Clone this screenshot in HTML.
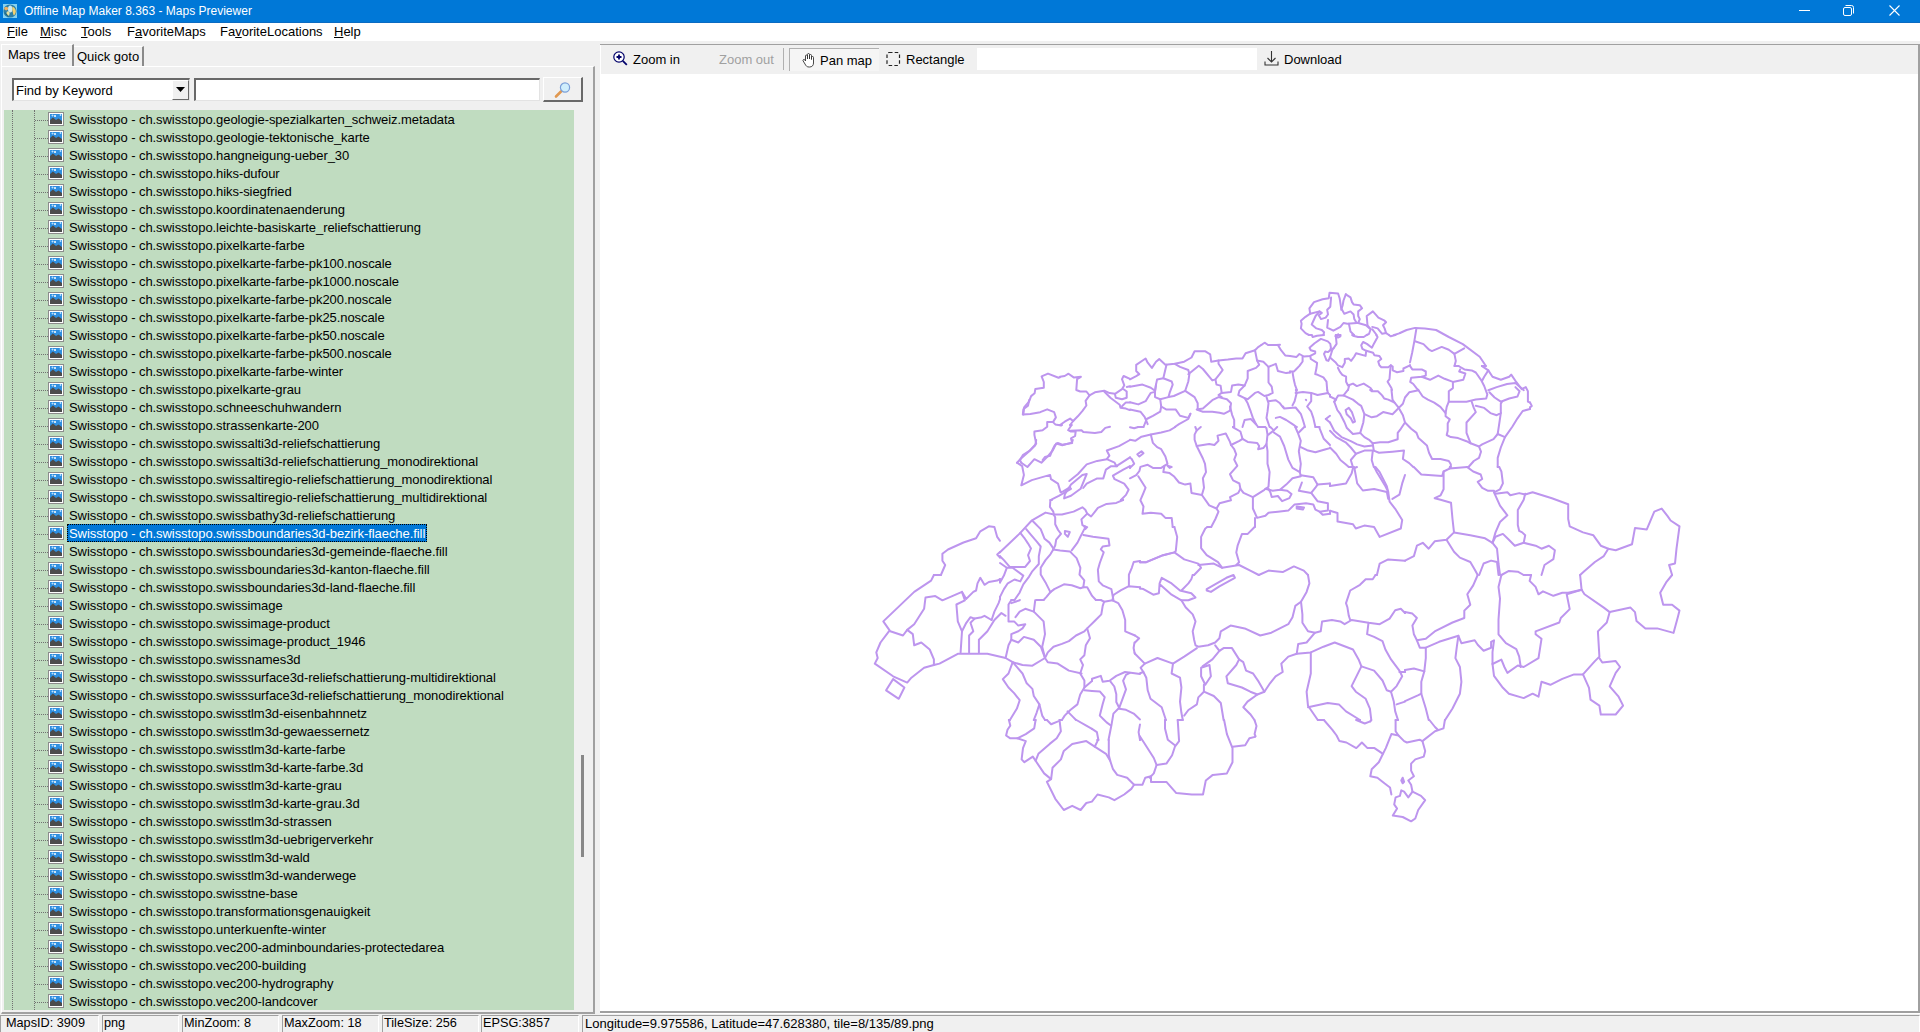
<!DOCTYPE html>
<html><head><meta charset="utf-8">
<style>
*{margin:0;padding:0;box-sizing:border-box}
html,body{width:1920px;height:1032px;overflow:hidden;background:#f0f0f0;font-family:"Liberation Sans",sans-serif;font-size:13px;color:#000;position:relative}
.abs{position:absolute}
#title{left:0;top:0;width:1920px;height:23px;background:#0078d7;color:#fff;border-bottom:1px solid #0a6bc2}
#title .tt{position:absolute;left:24px;top:4px;font-size:12px;color:#fff;white-space:nowrap}
#menu{left:0;top:23px;width:1920px;height:18px;background:#fff}
#menu span{position:absolute;top:1px;white-space:nowrap}
#menu u{text-decoration:underline;text-decoration-thickness:1px;text-underline-offset:1px}
.tab{position:absolute;white-space:nowrap}
.row{position:absolute;left:0;height:18px;width:563px}
.row .ic{position:absolute;left:44px;top:1px}
.row .t{position:absolute;left:63px;top:0;height:18px;line-height:19px;padding:0 2px;white-space:nowrap;letter-spacing:-0.07px}
.row .t.sel{background:#0078d7;color:#fff;outline:1px dotted #000;outline-offset:-1px}
.sb span{position:absolute;top:2px;white-space:nowrap}
.sp{position:absolute;top:1015px;height:17px;border-top:1px solid #a0a0a0;border-left:1px solid #a0a0a0;border-right:1px solid #fff;background:#f0f0f0}
.sp span{position:absolute;left:1px;top:0px;white-space:nowrap;font-size:12.7px}
</style></head><body>
<div id="title" class="abs">
 <svg class="abs" style="left:3px;top:4px" width="14" height="14" viewBox="0 0 14 14"><rect width="14" height="14" fill="#86d2f2"/><circle cx="7" cy="7" r="6.6" fill="#2c7fa8"/><ellipse cx="7.2" cy="5" rx="2.2" ry="3.5" fill="#cfe9ef"/><ellipse cx="3.2" cy="4.6" rx="2" ry="1.8" fill="#f0b060"/><path d="M9.5 2.5Q13 4 12.8 8Q12 12 10.5 11Q9.5 8 9.2 5Z" fill="#f2d070"/><ellipse cx="5" cy="9.5" rx="1.6" ry="2.2" fill="#e6e0a0"/><path d="M1.5 8Q3 12 6 13.2L4 10Z" fill="#1f5f6f"/></svg>
 <span class="tt">Offline Map Maker 8.363 - Maps Previewer</span>
 <svg class="abs" style="left:1799px;top:10px" width="11" height="2"><rect width="11" height="1" fill="#fff"/></svg>
 <svg class="abs" style="left:1843px;top:5px" width="11" height="11" viewBox="0 0 11 11"><rect x="0.5" y="2.5" width="8" height="8" rx="1.5" fill="none" stroke="#fff"/><path d="M2.5 0.5h6a2 2 0 0 1 2 2v6" fill="none" stroke="#fff"/></svg>
 <svg class="abs" style="left:1889px;top:5px" width="11" height="11" viewBox="0 0 11 11"><path d="M0.5 0.5L10.5 10.5M10.5 0.5L0.5 10.5" stroke="#fff" stroke-width="1.1"/></svg>
</div>
<div id="menu" class="abs">
 <span style="left:7px"><u>F</u>ile</span>
 <span style="left:40px"><u>M</u>isc</span>
 <span style="left:81px"><u>T</u>ools</span>
 <span style="left:127px">F<u>a</u>voriteMaps</span>
 <span style="left:220px">Fa<u>v</u>oriteLocations</span>
 <span style="left:334px"><u>H</u>elp</span>
</div>
<!-- left panel tabs -->
<div class="abs" style="left:1px;top:44px;width:73px;height:23px;background:#f0f0f0;border-top:1px solid #fff;border-left:1px solid #fff;border-right:2px solid #8a8a8a"></div>
<span class="tab" style="left:8px;top:47px">Maps tree</span>
<div class="abs" style="left:74px;top:46px;width:70px;height:20px;background:#f0f0f0;border-top:1px solid #fff;border-right:2px solid #8a8a8a"></div>
<span class="tab" style="left:77px;top:49px">Quick goto</span>
<!-- tab sheet -->
<div class="abs" style="left:1px;top:66px;width:594px;height:948px;border-top:1px solid #fff;border-left:1px solid #fff;border-right:2px solid #a0a0a0;border-bottom:2px solid #a0a0a0"></div>
<!-- combo -->
<div class="abs" style="left:12px;top:78px;width:178px;height:23px;background:#fff;border-top:2px solid #696969;border-left:2px solid #696969;border-bottom:1px solid #e3e3e3;border-right:1px solid #e3e3e3"></div>
<span class="abs" style="left:16px;top:83px">Find by Keyword</span>
<div class="abs" style="left:172px;top:80px;width:17px;height:20px;background:#f0f0f0;border-top:1px solid #fff;border-left:1px solid #fff;border-right:1px solid #696969;border-bottom:1px solid #696969"></div>
<svg class="abs" style="left:176px;top:87px" width="9" height="5"><path d="M0 0H9L4.5 5Z" fill="#000"/></svg>
<div class="abs" style="left:194px;top:78px;width:346px;height:23px;background:#fff;border-top:2px solid #696969;border-left:2px solid #696969;border-bottom:1px solid #e3e3e3;border-right:1px solid #e3e3e3"></div>
<div class="abs" style="left:543px;top:77px;width:40px;height:25px;background:#f0f0f0;border-top:1px solid #fff;border-left:1px solid #fff;border-right:2px solid #696969;border-bottom:2px solid #696969"></div>
<svg class="abs" style="left:554px;top:81px" width="18" height="18" viewBox="0 0 18 18"><line x1="2" y1="15.5" x2="7" y2="10.5" stroke="#e09850" stroke-width="2.6" stroke-linecap="round"/><circle cx="11" cy="6.5" r="4.6" fill="#cfeefc" stroke="#7a9fd8" stroke-width="1.2"/></svg>
<!-- tree -->
<div class="abs" style="left:4px;top:110px;width:570px;height:900px;background:#c0dcc0;overflow:hidden">
 <div class="abs" style="left:8px;top:0;width:1px;height:900px;border-left:1px dotted #707070"></div>
 <div class="abs" style="left:30px;top:0;width:1px;height:900px;border-left:1px dotted #707070"></div>
 <div class="abs" style="left:31px;top:10px;width:13px;height:1px;border-top:1px dotted #707070"></div><div class="abs" style="left:31px;top:28px;width:13px;height:1px;border-top:1px dotted #707070"></div><div class="abs" style="left:31px;top:46px;width:13px;height:1px;border-top:1px dotted #707070"></div><div class="abs" style="left:31px;top:64px;width:13px;height:1px;border-top:1px dotted #707070"></div><div class="abs" style="left:31px;top:82px;width:13px;height:1px;border-top:1px dotted #707070"></div><div class="abs" style="left:31px;top:100px;width:13px;height:1px;border-top:1px dotted #707070"></div><div class="abs" style="left:31px;top:118px;width:13px;height:1px;border-top:1px dotted #707070"></div><div class="abs" style="left:31px;top:136px;width:13px;height:1px;border-top:1px dotted #707070"></div><div class="abs" style="left:31px;top:154px;width:13px;height:1px;border-top:1px dotted #707070"></div><div class="abs" style="left:31px;top:172px;width:13px;height:1px;border-top:1px dotted #707070"></div><div class="abs" style="left:31px;top:190px;width:13px;height:1px;border-top:1px dotted #707070"></div><div class="abs" style="left:31px;top:208px;width:13px;height:1px;border-top:1px dotted #707070"></div><div class="abs" style="left:31px;top:226px;width:13px;height:1px;border-top:1px dotted #707070"></div><div class="abs" style="left:31px;top:244px;width:13px;height:1px;border-top:1px dotted #707070"></div><div class="abs" style="left:31px;top:262px;width:13px;height:1px;border-top:1px dotted #707070"></div><div class="abs" style="left:31px;top:280px;width:13px;height:1px;border-top:1px dotted #707070"></div><div class="abs" style="left:31px;top:298px;width:13px;height:1px;border-top:1px dotted #707070"></div><div class="abs" style="left:31px;top:316px;width:13px;height:1px;border-top:1px dotted #707070"></div><div class="abs" style="left:31px;top:334px;width:13px;height:1px;border-top:1px dotted #707070"></div><div class="abs" style="left:31px;top:352px;width:13px;height:1px;border-top:1px dotted #707070"></div><div class="abs" style="left:31px;top:370px;width:13px;height:1px;border-top:1px dotted #707070"></div><div class="abs" style="left:31px;top:388px;width:13px;height:1px;border-top:1px dotted #707070"></div><div class="abs" style="left:31px;top:406px;width:13px;height:1px;border-top:1px dotted #707070"></div><div class="abs" style="left:31px;top:424px;width:13px;height:1px;border-top:1px dotted #707070"></div><div class="abs" style="left:31px;top:442px;width:13px;height:1px;border-top:1px dotted #707070"></div><div class="abs" style="left:31px;top:460px;width:13px;height:1px;border-top:1px dotted #707070"></div><div class="abs" style="left:31px;top:478px;width:13px;height:1px;border-top:1px dotted #707070"></div><div class="abs" style="left:31px;top:496px;width:13px;height:1px;border-top:1px dotted #707070"></div><div class="abs" style="left:31px;top:514px;width:13px;height:1px;border-top:1px dotted #707070"></div><div class="abs" style="left:31px;top:532px;width:13px;height:1px;border-top:1px dotted #707070"></div><div class="abs" style="left:31px;top:550px;width:13px;height:1px;border-top:1px dotted #707070"></div><div class="abs" style="left:31px;top:568px;width:13px;height:1px;border-top:1px dotted #707070"></div><div class="abs" style="left:31px;top:586px;width:13px;height:1px;border-top:1px dotted #707070"></div><div class="abs" style="left:31px;top:604px;width:13px;height:1px;border-top:1px dotted #707070"></div><div class="abs" style="left:31px;top:622px;width:13px;height:1px;border-top:1px dotted #707070"></div><div class="abs" style="left:31px;top:640px;width:13px;height:1px;border-top:1px dotted #707070"></div><div class="abs" style="left:31px;top:658px;width:13px;height:1px;border-top:1px dotted #707070"></div><div class="abs" style="left:31px;top:676px;width:13px;height:1px;border-top:1px dotted #707070"></div><div class="abs" style="left:31px;top:694px;width:13px;height:1px;border-top:1px dotted #707070"></div><div class="abs" style="left:31px;top:712px;width:13px;height:1px;border-top:1px dotted #707070"></div><div class="abs" style="left:31px;top:730px;width:13px;height:1px;border-top:1px dotted #707070"></div><div class="abs" style="left:31px;top:748px;width:13px;height:1px;border-top:1px dotted #707070"></div><div class="abs" style="left:31px;top:766px;width:13px;height:1px;border-top:1px dotted #707070"></div><div class="abs" style="left:31px;top:784px;width:13px;height:1px;border-top:1px dotted #707070"></div><div class="abs" style="left:31px;top:802px;width:13px;height:1px;border-top:1px dotted #707070"></div><div class="abs" style="left:31px;top:820px;width:13px;height:1px;border-top:1px dotted #707070"></div><div class="abs" style="left:31px;top:838px;width:13px;height:1px;border-top:1px dotted #707070"></div><div class="abs" style="left:31px;top:856px;width:13px;height:1px;border-top:1px dotted #707070"></div><div class="abs" style="left:31px;top:874px;width:13px;height:1px;border-top:1px dotted #707070"></div><div class="abs" style="left:31px;top:892px;width:13px;height:1px;border-top:1px dotted #707070"></div>
 <div class="row" style="top:0px"><div class="hl"></div><svg class="ic" width="16" height="16" viewBox="0 0 16 16"><rect x="0.5" y="1.5" width="15" height="13" fill="#fff" stroke="#8c8c8c"/><rect x="2" y="3" width="12" height="10" fill="#2f8fe0"/><path d="M2 13 L2 9 L5 6.5 L8 9 L10.5 7.5 L14 10 L14 13Z" fill="#4b4b4b"/><circle cx="7" cy="5" r="1" fill="#fff"/><path d="M3.5 4.5h2M4.5 3.5v2M11.5 4h2M12.5 3v2" stroke="#bfe3ff" stroke-width="0.8"/></svg><span class="t">Swisstopo - ch.swisstopo.geologie-spezialkarten_schweiz.metadata</span></div>
<div class="row" style="top:18px"><div class="hl"></div><svg class="ic" width="16" height="16" viewBox="0 0 16 16"><rect x="0.5" y="1.5" width="15" height="13" fill="#fff" stroke="#8c8c8c"/><rect x="2" y="3" width="12" height="10" fill="#2f8fe0"/><path d="M2 13 L2 9 L5 6.5 L8 9 L10.5 7.5 L14 10 L14 13Z" fill="#4b4b4b"/><circle cx="7" cy="5" r="1" fill="#fff"/><path d="M3.5 4.5h2M4.5 3.5v2M11.5 4h2M12.5 3v2" stroke="#bfe3ff" stroke-width="0.8"/></svg><span class="t">Swisstopo - ch.swisstopo.geologie-tektonische_karte</span></div>
<div class="row" style="top:36px"><div class="hl"></div><svg class="ic" width="16" height="16" viewBox="0 0 16 16"><rect x="0.5" y="1.5" width="15" height="13" fill="#fff" stroke="#8c8c8c"/><rect x="2" y="3" width="12" height="10" fill="#2f8fe0"/><path d="M2 13 L2 9 L5 6.5 L8 9 L10.5 7.5 L14 10 L14 13Z" fill="#4b4b4b"/><circle cx="7" cy="5" r="1" fill="#fff"/><path d="M3.5 4.5h2M4.5 3.5v2M11.5 4h2M12.5 3v2" stroke="#bfe3ff" stroke-width="0.8"/></svg><span class="t">Swisstopo - ch.swisstopo.hangneigung-ueber_30</span></div>
<div class="row" style="top:54px"><div class="hl"></div><svg class="ic" width="16" height="16" viewBox="0 0 16 16"><rect x="0.5" y="1.5" width="15" height="13" fill="#fff" stroke="#8c8c8c"/><rect x="2" y="3" width="12" height="10" fill="#2f8fe0"/><path d="M2 13 L2 9 L5 6.5 L8 9 L10.5 7.5 L14 10 L14 13Z" fill="#4b4b4b"/><circle cx="7" cy="5" r="1" fill="#fff"/><path d="M3.5 4.5h2M4.5 3.5v2M11.5 4h2M12.5 3v2" stroke="#bfe3ff" stroke-width="0.8"/></svg><span class="t">Swisstopo - ch.swisstopo.hiks-dufour</span></div>
<div class="row" style="top:72px"><div class="hl"></div><svg class="ic" width="16" height="16" viewBox="0 0 16 16"><rect x="0.5" y="1.5" width="15" height="13" fill="#fff" stroke="#8c8c8c"/><rect x="2" y="3" width="12" height="10" fill="#2f8fe0"/><path d="M2 13 L2 9 L5 6.5 L8 9 L10.5 7.5 L14 10 L14 13Z" fill="#4b4b4b"/><circle cx="7" cy="5" r="1" fill="#fff"/><path d="M3.5 4.5h2M4.5 3.5v2M11.5 4h2M12.5 3v2" stroke="#bfe3ff" stroke-width="0.8"/></svg><span class="t">Swisstopo - ch.swisstopo.hiks-siegfried</span></div>
<div class="row" style="top:90px"><div class="hl"></div><svg class="ic" width="16" height="16" viewBox="0 0 16 16"><rect x="0.5" y="1.5" width="15" height="13" fill="#fff" stroke="#8c8c8c"/><rect x="2" y="3" width="12" height="10" fill="#2f8fe0"/><path d="M2 13 L2 9 L5 6.5 L8 9 L10.5 7.5 L14 10 L14 13Z" fill="#4b4b4b"/><circle cx="7" cy="5" r="1" fill="#fff"/><path d="M3.5 4.5h2M4.5 3.5v2M11.5 4h2M12.5 3v2" stroke="#bfe3ff" stroke-width="0.8"/></svg><span class="t">Swisstopo - ch.swisstopo.koordinatenaenderung</span></div>
<div class="row" style="top:108px"><div class="hl"></div><svg class="ic" width="16" height="16" viewBox="0 0 16 16"><rect x="0.5" y="1.5" width="15" height="13" fill="#fff" stroke="#8c8c8c"/><rect x="2" y="3" width="12" height="10" fill="#2f8fe0"/><path d="M2 13 L2 9 L5 6.5 L8 9 L10.5 7.5 L14 10 L14 13Z" fill="#4b4b4b"/><circle cx="7" cy="5" r="1" fill="#fff"/><path d="M3.5 4.5h2M4.5 3.5v2M11.5 4h2M12.5 3v2" stroke="#bfe3ff" stroke-width="0.8"/></svg><span class="t">Swisstopo - ch.swisstopo.leichte-basiskarte_reliefschattierung</span></div>
<div class="row" style="top:126px"><div class="hl"></div><svg class="ic" width="16" height="16" viewBox="0 0 16 16"><rect x="0.5" y="1.5" width="15" height="13" fill="#fff" stroke="#8c8c8c"/><rect x="2" y="3" width="12" height="10" fill="#2f8fe0"/><path d="M2 13 L2 9 L5 6.5 L8 9 L10.5 7.5 L14 10 L14 13Z" fill="#4b4b4b"/><circle cx="7" cy="5" r="1" fill="#fff"/><path d="M3.5 4.5h2M4.5 3.5v2M11.5 4h2M12.5 3v2" stroke="#bfe3ff" stroke-width="0.8"/></svg><span class="t">Swisstopo - ch.swisstopo.pixelkarte-farbe</span></div>
<div class="row" style="top:144px"><div class="hl"></div><svg class="ic" width="16" height="16" viewBox="0 0 16 16"><rect x="0.5" y="1.5" width="15" height="13" fill="#fff" stroke="#8c8c8c"/><rect x="2" y="3" width="12" height="10" fill="#2f8fe0"/><path d="M2 13 L2 9 L5 6.5 L8 9 L10.5 7.5 L14 10 L14 13Z" fill="#4b4b4b"/><circle cx="7" cy="5" r="1" fill="#fff"/><path d="M3.5 4.5h2M4.5 3.5v2M11.5 4h2M12.5 3v2" stroke="#bfe3ff" stroke-width="0.8"/></svg><span class="t">Swisstopo - ch.swisstopo.pixelkarte-farbe-pk100.noscale</span></div>
<div class="row" style="top:162px"><div class="hl"></div><svg class="ic" width="16" height="16" viewBox="0 0 16 16"><rect x="0.5" y="1.5" width="15" height="13" fill="#fff" stroke="#8c8c8c"/><rect x="2" y="3" width="12" height="10" fill="#2f8fe0"/><path d="M2 13 L2 9 L5 6.5 L8 9 L10.5 7.5 L14 10 L14 13Z" fill="#4b4b4b"/><circle cx="7" cy="5" r="1" fill="#fff"/><path d="M3.5 4.5h2M4.5 3.5v2M11.5 4h2M12.5 3v2" stroke="#bfe3ff" stroke-width="0.8"/></svg><span class="t">Swisstopo - ch.swisstopo.pixelkarte-farbe-pk1000.noscale</span></div>
<div class="row" style="top:180px"><div class="hl"></div><svg class="ic" width="16" height="16" viewBox="0 0 16 16"><rect x="0.5" y="1.5" width="15" height="13" fill="#fff" stroke="#8c8c8c"/><rect x="2" y="3" width="12" height="10" fill="#2f8fe0"/><path d="M2 13 L2 9 L5 6.5 L8 9 L10.5 7.5 L14 10 L14 13Z" fill="#4b4b4b"/><circle cx="7" cy="5" r="1" fill="#fff"/><path d="M3.5 4.5h2M4.5 3.5v2M11.5 4h2M12.5 3v2" stroke="#bfe3ff" stroke-width="0.8"/></svg><span class="t">Swisstopo - ch.swisstopo.pixelkarte-farbe-pk200.noscale</span></div>
<div class="row" style="top:198px"><div class="hl"></div><svg class="ic" width="16" height="16" viewBox="0 0 16 16"><rect x="0.5" y="1.5" width="15" height="13" fill="#fff" stroke="#8c8c8c"/><rect x="2" y="3" width="12" height="10" fill="#2f8fe0"/><path d="M2 13 L2 9 L5 6.5 L8 9 L10.5 7.5 L14 10 L14 13Z" fill="#4b4b4b"/><circle cx="7" cy="5" r="1" fill="#fff"/><path d="M3.5 4.5h2M4.5 3.5v2M11.5 4h2M12.5 3v2" stroke="#bfe3ff" stroke-width="0.8"/></svg><span class="t">Swisstopo - ch.swisstopo.pixelkarte-farbe-pk25.noscale</span></div>
<div class="row" style="top:216px"><div class="hl"></div><svg class="ic" width="16" height="16" viewBox="0 0 16 16"><rect x="0.5" y="1.5" width="15" height="13" fill="#fff" stroke="#8c8c8c"/><rect x="2" y="3" width="12" height="10" fill="#2f8fe0"/><path d="M2 13 L2 9 L5 6.5 L8 9 L10.5 7.5 L14 10 L14 13Z" fill="#4b4b4b"/><circle cx="7" cy="5" r="1" fill="#fff"/><path d="M3.5 4.5h2M4.5 3.5v2M11.5 4h2M12.5 3v2" stroke="#bfe3ff" stroke-width="0.8"/></svg><span class="t">Swisstopo - ch.swisstopo.pixelkarte-farbe-pk50.noscale</span></div>
<div class="row" style="top:234px"><div class="hl"></div><svg class="ic" width="16" height="16" viewBox="0 0 16 16"><rect x="0.5" y="1.5" width="15" height="13" fill="#fff" stroke="#8c8c8c"/><rect x="2" y="3" width="12" height="10" fill="#2f8fe0"/><path d="M2 13 L2 9 L5 6.5 L8 9 L10.5 7.5 L14 10 L14 13Z" fill="#4b4b4b"/><circle cx="7" cy="5" r="1" fill="#fff"/><path d="M3.5 4.5h2M4.5 3.5v2M11.5 4h2M12.5 3v2" stroke="#bfe3ff" stroke-width="0.8"/></svg><span class="t">Swisstopo - ch.swisstopo.pixelkarte-farbe-pk500.noscale</span></div>
<div class="row" style="top:252px"><div class="hl"></div><svg class="ic" width="16" height="16" viewBox="0 0 16 16"><rect x="0.5" y="1.5" width="15" height="13" fill="#fff" stroke="#8c8c8c"/><rect x="2" y="3" width="12" height="10" fill="#2f8fe0"/><path d="M2 13 L2 9 L5 6.5 L8 9 L10.5 7.5 L14 10 L14 13Z" fill="#4b4b4b"/><circle cx="7" cy="5" r="1" fill="#fff"/><path d="M3.5 4.5h2M4.5 3.5v2M11.5 4h2M12.5 3v2" stroke="#bfe3ff" stroke-width="0.8"/></svg><span class="t">Swisstopo - ch.swisstopo.pixelkarte-farbe-winter</span></div>
<div class="row" style="top:270px"><div class="hl"></div><svg class="ic" width="16" height="16" viewBox="0 0 16 16"><rect x="0.5" y="1.5" width="15" height="13" fill="#fff" stroke="#8c8c8c"/><rect x="2" y="3" width="12" height="10" fill="#2f8fe0"/><path d="M2 13 L2 9 L5 6.5 L8 9 L10.5 7.5 L14 10 L14 13Z" fill="#4b4b4b"/><circle cx="7" cy="5" r="1" fill="#fff"/><path d="M3.5 4.5h2M4.5 3.5v2M11.5 4h2M12.5 3v2" stroke="#bfe3ff" stroke-width="0.8"/></svg><span class="t">Swisstopo - ch.swisstopo.pixelkarte-grau</span></div>
<div class="row" style="top:288px"><div class="hl"></div><svg class="ic" width="16" height="16" viewBox="0 0 16 16"><rect x="0.5" y="1.5" width="15" height="13" fill="#fff" stroke="#8c8c8c"/><rect x="2" y="3" width="12" height="10" fill="#2f8fe0"/><path d="M2 13 L2 9 L5 6.5 L8 9 L10.5 7.5 L14 10 L14 13Z" fill="#4b4b4b"/><circle cx="7" cy="5" r="1" fill="#fff"/><path d="M3.5 4.5h2M4.5 3.5v2M11.5 4h2M12.5 3v2" stroke="#bfe3ff" stroke-width="0.8"/></svg><span class="t">Swisstopo - ch.swisstopo.schneeschuhwandern</span></div>
<div class="row" style="top:306px"><div class="hl"></div><svg class="ic" width="16" height="16" viewBox="0 0 16 16"><rect x="0.5" y="1.5" width="15" height="13" fill="#fff" stroke="#8c8c8c"/><rect x="2" y="3" width="12" height="10" fill="#2f8fe0"/><path d="M2 13 L2 9 L5 6.5 L8 9 L10.5 7.5 L14 10 L14 13Z" fill="#4b4b4b"/><circle cx="7" cy="5" r="1" fill="#fff"/><path d="M3.5 4.5h2M4.5 3.5v2M11.5 4h2M12.5 3v2" stroke="#bfe3ff" stroke-width="0.8"/></svg><span class="t">Swisstopo - ch.swisstopo.strassenkarte-200</span></div>
<div class="row" style="top:324px"><div class="hl"></div><svg class="ic" width="16" height="16" viewBox="0 0 16 16"><rect x="0.5" y="1.5" width="15" height="13" fill="#fff" stroke="#8c8c8c"/><rect x="2" y="3" width="12" height="10" fill="#2f8fe0"/><path d="M2 13 L2 9 L5 6.5 L8 9 L10.5 7.5 L14 10 L14 13Z" fill="#4b4b4b"/><circle cx="7" cy="5" r="1" fill="#fff"/><path d="M3.5 4.5h2M4.5 3.5v2M11.5 4h2M12.5 3v2" stroke="#bfe3ff" stroke-width="0.8"/></svg><span class="t">Swisstopo - ch.swisstopo.swissalti3d-reliefschattierung</span></div>
<div class="row" style="top:342px"><div class="hl"></div><svg class="ic" width="16" height="16" viewBox="0 0 16 16"><rect x="0.5" y="1.5" width="15" height="13" fill="#fff" stroke="#8c8c8c"/><rect x="2" y="3" width="12" height="10" fill="#2f8fe0"/><path d="M2 13 L2 9 L5 6.5 L8 9 L10.5 7.5 L14 10 L14 13Z" fill="#4b4b4b"/><circle cx="7" cy="5" r="1" fill="#fff"/><path d="M3.5 4.5h2M4.5 3.5v2M11.5 4h2M12.5 3v2" stroke="#bfe3ff" stroke-width="0.8"/></svg><span class="t">Swisstopo - ch.swisstopo.swissalti3d-reliefschattierung_monodirektional</span></div>
<div class="row" style="top:360px"><div class="hl"></div><svg class="ic" width="16" height="16" viewBox="0 0 16 16"><rect x="0.5" y="1.5" width="15" height="13" fill="#fff" stroke="#8c8c8c"/><rect x="2" y="3" width="12" height="10" fill="#2f8fe0"/><path d="M2 13 L2 9 L5 6.5 L8 9 L10.5 7.5 L14 10 L14 13Z" fill="#4b4b4b"/><circle cx="7" cy="5" r="1" fill="#fff"/><path d="M3.5 4.5h2M4.5 3.5v2M11.5 4h2M12.5 3v2" stroke="#bfe3ff" stroke-width="0.8"/></svg><span class="t">Swisstopo - ch.swisstopo.swissaltiregio-reliefschattierung_monodirektional</span></div>
<div class="row" style="top:378px"><div class="hl"></div><svg class="ic" width="16" height="16" viewBox="0 0 16 16"><rect x="0.5" y="1.5" width="15" height="13" fill="#fff" stroke="#8c8c8c"/><rect x="2" y="3" width="12" height="10" fill="#2f8fe0"/><path d="M2 13 L2 9 L5 6.5 L8 9 L10.5 7.5 L14 10 L14 13Z" fill="#4b4b4b"/><circle cx="7" cy="5" r="1" fill="#fff"/><path d="M3.5 4.5h2M4.5 3.5v2M11.5 4h2M12.5 3v2" stroke="#bfe3ff" stroke-width="0.8"/></svg><span class="t">Swisstopo - ch.swisstopo.swissaltiregio-reliefschattierung_multidirektional</span></div>
<div class="row" style="top:396px"><div class="hl"></div><svg class="ic" width="16" height="16" viewBox="0 0 16 16"><rect x="0.5" y="1.5" width="15" height="13" fill="#fff" stroke="#8c8c8c"/><rect x="2" y="3" width="12" height="10" fill="#2f8fe0"/><path d="M2 13 L2 9 L5 6.5 L8 9 L10.5 7.5 L14 10 L14 13Z" fill="#4b4b4b"/><circle cx="7" cy="5" r="1" fill="#fff"/><path d="M3.5 4.5h2M4.5 3.5v2M11.5 4h2M12.5 3v2" stroke="#bfe3ff" stroke-width="0.8"/></svg><span class="t">Swisstopo - ch.swisstopo.swissbathy3d-reliefschattierung</span></div>
<div class="row" style="top:414px"><div class="hl"></div><svg class="ic" width="16" height="16" viewBox="0 0 16 16"><rect x="0.5" y="1.5" width="15" height="13" fill="#fff" stroke="#8c8c8c"/><rect x="2" y="3" width="12" height="10" fill="#2f8fe0"/><path d="M2 13 L2 9 L5 6.5 L8 9 L10.5 7.5 L14 10 L14 13Z" fill="#4b4b4b"/><circle cx="7" cy="5" r="1" fill="#fff"/><path d="M3.5 4.5h2M4.5 3.5v2M11.5 4h2M12.5 3v2" stroke="#bfe3ff" stroke-width="0.8"/></svg><span class="t sel">Swisstopo - ch.swisstopo.swissboundaries3d-bezirk-flaeche.fill</span></div>
<div class="row" style="top:432px"><div class="hl"></div><svg class="ic" width="16" height="16" viewBox="0 0 16 16"><rect x="0.5" y="1.5" width="15" height="13" fill="#fff" stroke="#8c8c8c"/><rect x="2" y="3" width="12" height="10" fill="#2f8fe0"/><path d="M2 13 L2 9 L5 6.5 L8 9 L10.5 7.5 L14 10 L14 13Z" fill="#4b4b4b"/><circle cx="7" cy="5" r="1" fill="#fff"/><path d="M3.5 4.5h2M4.5 3.5v2M11.5 4h2M12.5 3v2" stroke="#bfe3ff" stroke-width="0.8"/></svg><span class="t">Swisstopo - ch.swisstopo.swissboundaries3d-gemeinde-flaeche.fill</span></div>
<div class="row" style="top:450px"><div class="hl"></div><svg class="ic" width="16" height="16" viewBox="0 0 16 16"><rect x="0.5" y="1.5" width="15" height="13" fill="#fff" stroke="#8c8c8c"/><rect x="2" y="3" width="12" height="10" fill="#2f8fe0"/><path d="M2 13 L2 9 L5 6.5 L8 9 L10.5 7.5 L14 10 L14 13Z" fill="#4b4b4b"/><circle cx="7" cy="5" r="1" fill="#fff"/><path d="M3.5 4.5h2M4.5 3.5v2M11.5 4h2M12.5 3v2" stroke="#bfe3ff" stroke-width="0.8"/></svg><span class="t">Swisstopo - ch.swisstopo.swissboundaries3d-kanton-flaeche.fill</span></div>
<div class="row" style="top:468px"><div class="hl"></div><svg class="ic" width="16" height="16" viewBox="0 0 16 16"><rect x="0.5" y="1.5" width="15" height="13" fill="#fff" stroke="#8c8c8c"/><rect x="2" y="3" width="12" height="10" fill="#2f8fe0"/><path d="M2 13 L2 9 L5 6.5 L8 9 L10.5 7.5 L14 10 L14 13Z" fill="#4b4b4b"/><circle cx="7" cy="5" r="1" fill="#fff"/><path d="M3.5 4.5h2M4.5 3.5v2M11.5 4h2M12.5 3v2" stroke="#bfe3ff" stroke-width="0.8"/></svg><span class="t">Swisstopo - ch.swisstopo.swissboundaries3d-land-flaeche.fill</span></div>
<div class="row" style="top:486px"><div class="hl"></div><svg class="ic" width="16" height="16" viewBox="0 0 16 16"><rect x="0.5" y="1.5" width="15" height="13" fill="#fff" stroke="#8c8c8c"/><rect x="2" y="3" width="12" height="10" fill="#2f8fe0"/><path d="M2 13 L2 9 L5 6.5 L8 9 L10.5 7.5 L14 10 L14 13Z" fill="#4b4b4b"/><circle cx="7" cy="5" r="1" fill="#fff"/><path d="M3.5 4.5h2M4.5 3.5v2M11.5 4h2M12.5 3v2" stroke="#bfe3ff" stroke-width="0.8"/></svg><span class="t">Swisstopo - ch.swisstopo.swissimage</span></div>
<div class="row" style="top:504px"><div class="hl"></div><svg class="ic" width="16" height="16" viewBox="0 0 16 16"><rect x="0.5" y="1.5" width="15" height="13" fill="#fff" stroke="#8c8c8c"/><rect x="2" y="3" width="12" height="10" fill="#2f8fe0"/><path d="M2 13 L2 9 L5 6.5 L8 9 L10.5 7.5 L14 10 L14 13Z" fill="#4b4b4b"/><circle cx="7" cy="5" r="1" fill="#fff"/><path d="M3.5 4.5h2M4.5 3.5v2M11.5 4h2M12.5 3v2" stroke="#bfe3ff" stroke-width="0.8"/></svg><span class="t">Swisstopo - ch.swisstopo.swissimage-product</span></div>
<div class="row" style="top:522px"><div class="hl"></div><svg class="ic" width="16" height="16" viewBox="0 0 16 16"><rect x="0.5" y="1.5" width="15" height="13" fill="#fff" stroke="#8c8c8c"/><rect x="2" y="3" width="12" height="10" fill="#2f8fe0"/><path d="M2 13 L2 9 L5 6.5 L8 9 L10.5 7.5 L14 10 L14 13Z" fill="#4b4b4b"/><circle cx="7" cy="5" r="1" fill="#fff"/><path d="M3.5 4.5h2M4.5 3.5v2M11.5 4h2M12.5 3v2" stroke="#bfe3ff" stroke-width="0.8"/></svg><span class="t">Swisstopo - ch.swisstopo.swissimage-product_1946</span></div>
<div class="row" style="top:540px"><div class="hl"></div><svg class="ic" width="16" height="16" viewBox="0 0 16 16"><rect x="0.5" y="1.5" width="15" height="13" fill="#fff" stroke="#8c8c8c"/><rect x="2" y="3" width="12" height="10" fill="#2f8fe0"/><path d="M2 13 L2 9 L5 6.5 L8 9 L10.5 7.5 L14 10 L14 13Z" fill="#4b4b4b"/><circle cx="7" cy="5" r="1" fill="#fff"/><path d="M3.5 4.5h2M4.5 3.5v2M11.5 4h2M12.5 3v2" stroke="#bfe3ff" stroke-width="0.8"/></svg><span class="t">Swisstopo - ch.swisstopo.swissnames3d</span></div>
<div class="row" style="top:558px"><div class="hl"></div><svg class="ic" width="16" height="16" viewBox="0 0 16 16"><rect x="0.5" y="1.5" width="15" height="13" fill="#fff" stroke="#8c8c8c"/><rect x="2" y="3" width="12" height="10" fill="#2f8fe0"/><path d="M2 13 L2 9 L5 6.5 L8 9 L10.5 7.5 L14 10 L14 13Z" fill="#4b4b4b"/><circle cx="7" cy="5" r="1" fill="#fff"/><path d="M3.5 4.5h2M4.5 3.5v2M11.5 4h2M12.5 3v2" stroke="#bfe3ff" stroke-width="0.8"/></svg><span class="t">Swisstopo - ch.swisstopo.swisssurface3d-reliefschattierung-multidirektional</span></div>
<div class="row" style="top:576px"><div class="hl"></div><svg class="ic" width="16" height="16" viewBox="0 0 16 16"><rect x="0.5" y="1.5" width="15" height="13" fill="#fff" stroke="#8c8c8c"/><rect x="2" y="3" width="12" height="10" fill="#2f8fe0"/><path d="M2 13 L2 9 L5 6.5 L8 9 L10.5 7.5 L14 10 L14 13Z" fill="#4b4b4b"/><circle cx="7" cy="5" r="1" fill="#fff"/><path d="M3.5 4.5h2M4.5 3.5v2M11.5 4h2M12.5 3v2" stroke="#bfe3ff" stroke-width="0.8"/></svg><span class="t">Swisstopo - ch.swisstopo.swisssurface3d-reliefschattierung_monodirektional</span></div>
<div class="row" style="top:594px"><div class="hl"></div><svg class="ic" width="16" height="16" viewBox="0 0 16 16"><rect x="0.5" y="1.5" width="15" height="13" fill="#fff" stroke="#8c8c8c"/><rect x="2" y="3" width="12" height="10" fill="#2f8fe0"/><path d="M2 13 L2 9 L5 6.5 L8 9 L10.5 7.5 L14 10 L14 13Z" fill="#4b4b4b"/><circle cx="7" cy="5" r="1" fill="#fff"/><path d="M3.5 4.5h2M4.5 3.5v2M11.5 4h2M12.5 3v2" stroke="#bfe3ff" stroke-width="0.8"/></svg><span class="t">Swisstopo - ch.swisstopo.swisstlm3d-eisenbahnnetz</span></div>
<div class="row" style="top:612px"><div class="hl"></div><svg class="ic" width="16" height="16" viewBox="0 0 16 16"><rect x="0.5" y="1.5" width="15" height="13" fill="#fff" stroke="#8c8c8c"/><rect x="2" y="3" width="12" height="10" fill="#2f8fe0"/><path d="M2 13 L2 9 L5 6.5 L8 9 L10.5 7.5 L14 10 L14 13Z" fill="#4b4b4b"/><circle cx="7" cy="5" r="1" fill="#fff"/><path d="M3.5 4.5h2M4.5 3.5v2M11.5 4h2M12.5 3v2" stroke="#bfe3ff" stroke-width="0.8"/></svg><span class="t">Swisstopo - ch.swisstopo.swisstlm3d-gewaessernetz</span></div>
<div class="row" style="top:630px"><div class="hl"></div><svg class="ic" width="16" height="16" viewBox="0 0 16 16"><rect x="0.5" y="1.5" width="15" height="13" fill="#fff" stroke="#8c8c8c"/><rect x="2" y="3" width="12" height="10" fill="#2f8fe0"/><path d="M2 13 L2 9 L5 6.5 L8 9 L10.5 7.5 L14 10 L14 13Z" fill="#4b4b4b"/><circle cx="7" cy="5" r="1" fill="#fff"/><path d="M3.5 4.5h2M4.5 3.5v2M11.5 4h2M12.5 3v2" stroke="#bfe3ff" stroke-width="0.8"/></svg><span class="t">Swisstopo - ch.swisstopo.swisstlm3d-karte-farbe</span></div>
<div class="row" style="top:648px"><div class="hl"></div><svg class="ic" width="16" height="16" viewBox="0 0 16 16"><rect x="0.5" y="1.5" width="15" height="13" fill="#fff" stroke="#8c8c8c"/><rect x="2" y="3" width="12" height="10" fill="#2f8fe0"/><path d="M2 13 L2 9 L5 6.5 L8 9 L10.5 7.5 L14 10 L14 13Z" fill="#4b4b4b"/><circle cx="7" cy="5" r="1" fill="#fff"/><path d="M3.5 4.5h2M4.5 3.5v2M11.5 4h2M12.5 3v2" stroke="#bfe3ff" stroke-width="0.8"/></svg><span class="t">Swisstopo - ch.swisstopo.swisstlm3d-karte-farbe.3d</span></div>
<div class="row" style="top:666px"><div class="hl"></div><svg class="ic" width="16" height="16" viewBox="0 0 16 16"><rect x="0.5" y="1.5" width="15" height="13" fill="#fff" stroke="#8c8c8c"/><rect x="2" y="3" width="12" height="10" fill="#2f8fe0"/><path d="M2 13 L2 9 L5 6.5 L8 9 L10.5 7.5 L14 10 L14 13Z" fill="#4b4b4b"/><circle cx="7" cy="5" r="1" fill="#fff"/><path d="M3.5 4.5h2M4.5 3.5v2M11.5 4h2M12.5 3v2" stroke="#bfe3ff" stroke-width="0.8"/></svg><span class="t">Swisstopo - ch.swisstopo.swisstlm3d-karte-grau</span></div>
<div class="row" style="top:684px"><div class="hl"></div><svg class="ic" width="16" height="16" viewBox="0 0 16 16"><rect x="0.5" y="1.5" width="15" height="13" fill="#fff" stroke="#8c8c8c"/><rect x="2" y="3" width="12" height="10" fill="#2f8fe0"/><path d="M2 13 L2 9 L5 6.5 L8 9 L10.5 7.5 L14 10 L14 13Z" fill="#4b4b4b"/><circle cx="7" cy="5" r="1" fill="#fff"/><path d="M3.5 4.5h2M4.5 3.5v2M11.5 4h2M12.5 3v2" stroke="#bfe3ff" stroke-width="0.8"/></svg><span class="t">Swisstopo - ch.swisstopo.swisstlm3d-karte-grau.3d</span></div>
<div class="row" style="top:702px"><div class="hl"></div><svg class="ic" width="16" height="16" viewBox="0 0 16 16"><rect x="0.5" y="1.5" width="15" height="13" fill="#fff" stroke="#8c8c8c"/><rect x="2" y="3" width="12" height="10" fill="#2f8fe0"/><path d="M2 13 L2 9 L5 6.5 L8 9 L10.5 7.5 L14 10 L14 13Z" fill="#4b4b4b"/><circle cx="7" cy="5" r="1" fill="#fff"/><path d="M3.5 4.5h2M4.5 3.5v2M11.5 4h2M12.5 3v2" stroke="#bfe3ff" stroke-width="0.8"/></svg><span class="t">Swisstopo - ch.swisstopo.swisstlm3d-strassen</span></div>
<div class="row" style="top:720px"><div class="hl"></div><svg class="ic" width="16" height="16" viewBox="0 0 16 16"><rect x="0.5" y="1.5" width="15" height="13" fill="#fff" stroke="#8c8c8c"/><rect x="2" y="3" width="12" height="10" fill="#2f8fe0"/><path d="M2 13 L2 9 L5 6.5 L8 9 L10.5 7.5 L14 10 L14 13Z" fill="#4b4b4b"/><circle cx="7" cy="5" r="1" fill="#fff"/><path d="M3.5 4.5h2M4.5 3.5v2M11.5 4h2M12.5 3v2" stroke="#bfe3ff" stroke-width="0.8"/></svg><span class="t">Swisstopo - ch.swisstopo.swisstlm3d-uebrigerverkehr</span></div>
<div class="row" style="top:738px"><div class="hl"></div><svg class="ic" width="16" height="16" viewBox="0 0 16 16"><rect x="0.5" y="1.5" width="15" height="13" fill="#fff" stroke="#8c8c8c"/><rect x="2" y="3" width="12" height="10" fill="#2f8fe0"/><path d="M2 13 L2 9 L5 6.5 L8 9 L10.5 7.5 L14 10 L14 13Z" fill="#4b4b4b"/><circle cx="7" cy="5" r="1" fill="#fff"/><path d="M3.5 4.5h2M4.5 3.5v2M11.5 4h2M12.5 3v2" stroke="#bfe3ff" stroke-width="0.8"/></svg><span class="t">Swisstopo - ch.swisstopo.swisstlm3d-wald</span></div>
<div class="row" style="top:756px"><div class="hl"></div><svg class="ic" width="16" height="16" viewBox="0 0 16 16"><rect x="0.5" y="1.5" width="15" height="13" fill="#fff" stroke="#8c8c8c"/><rect x="2" y="3" width="12" height="10" fill="#2f8fe0"/><path d="M2 13 L2 9 L5 6.5 L8 9 L10.5 7.5 L14 10 L14 13Z" fill="#4b4b4b"/><circle cx="7" cy="5" r="1" fill="#fff"/><path d="M3.5 4.5h2M4.5 3.5v2M11.5 4h2M12.5 3v2" stroke="#bfe3ff" stroke-width="0.8"/></svg><span class="t">Swisstopo - ch.swisstopo.swisstlm3d-wanderwege</span></div>
<div class="row" style="top:774px"><div class="hl"></div><svg class="ic" width="16" height="16" viewBox="0 0 16 16"><rect x="0.5" y="1.5" width="15" height="13" fill="#fff" stroke="#8c8c8c"/><rect x="2" y="3" width="12" height="10" fill="#2f8fe0"/><path d="M2 13 L2 9 L5 6.5 L8 9 L10.5 7.5 L14 10 L14 13Z" fill="#4b4b4b"/><circle cx="7" cy="5" r="1" fill="#fff"/><path d="M3.5 4.5h2M4.5 3.5v2M11.5 4h2M12.5 3v2" stroke="#bfe3ff" stroke-width="0.8"/></svg><span class="t">Swisstopo - ch.swisstopo.swisstne-base</span></div>
<div class="row" style="top:792px"><div class="hl"></div><svg class="ic" width="16" height="16" viewBox="0 0 16 16"><rect x="0.5" y="1.5" width="15" height="13" fill="#fff" stroke="#8c8c8c"/><rect x="2" y="3" width="12" height="10" fill="#2f8fe0"/><path d="M2 13 L2 9 L5 6.5 L8 9 L10.5 7.5 L14 10 L14 13Z" fill="#4b4b4b"/><circle cx="7" cy="5" r="1" fill="#fff"/><path d="M3.5 4.5h2M4.5 3.5v2M11.5 4h2M12.5 3v2" stroke="#bfe3ff" stroke-width="0.8"/></svg><span class="t">Swisstopo - ch.swisstopo.transformationsgenauigkeit</span></div>
<div class="row" style="top:810px"><div class="hl"></div><svg class="ic" width="16" height="16" viewBox="0 0 16 16"><rect x="0.5" y="1.5" width="15" height="13" fill="#fff" stroke="#8c8c8c"/><rect x="2" y="3" width="12" height="10" fill="#2f8fe0"/><path d="M2 13 L2 9 L5 6.5 L8 9 L10.5 7.5 L14 10 L14 13Z" fill="#4b4b4b"/><circle cx="7" cy="5" r="1" fill="#fff"/><path d="M3.5 4.5h2M4.5 3.5v2M11.5 4h2M12.5 3v2" stroke="#bfe3ff" stroke-width="0.8"/></svg><span class="t">Swisstopo - ch.swisstopo.unterkuenfte-winter</span></div>
<div class="row" style="top:828px"><div class="hl"></div><svg class="ic" width="16" height="16" viewBox="0 0 16 16"><rect x="0.5" y="1.5" width="15" height="13" fill="#fff" stroke="#8c8c8c"/><rect x="2" y="3" width="12" height="10" fill="#2f8fe0"/><path d="M2 13 L2 9 L5 6.5 L8 9 L10.5 7.5 L14 10 L14 13Z" fill="#4b4b4b"/><circle cx="7" cy="5" r="1" fill="#fff"/><path d="M3.5 4.5h2M4.5 3.5v2M11.5 4h2M12.5 3v2" stroke="#bfe3ff" stroke-width="0.8"/></svg><span class="t">Swisstopo - ch.swisstopo.vec200-adminboundaries-protectedarea</span></div>
<div class="row" style="top:846px"><div class="hl"></div><svg class="ic" width="16" height="16" viewBox="0 0 16 16"><rect x="0.5" y="1.5" width="15" height="13" fill="#fff" stroke="#8c8c8c"/><rect x="2" y="3" width="12" height="10" fill="#2f8fe0"/><path d="M2 13 L2 9 L5 6.5 L8 9 L10.5 7.5 L14 10 L14 13Z" fill="#4b4b4b"/><circle cx="7" cy="5" r="1" fill="#fff"/><path d="M3.5 4.5h2M4.5 3.5v2M11.5 4h2M12.5 3v2" stroke="#bfe3ff" stroke-width="0.8"/></svg><span class="t">Swisstopo - ch.swisstopo.vec200-building</span></div>
<div class="row" style="top:864px"><div class="hl"></div><svg class="ic" width="16" height="16" viewBox="0 0 16 16"><rect x="0.5" y="1.5" width="15" height="13" fill="#fff" stroke="#8c8c8c"/><rect x="2" y="3" width="12" height="10" fill="#2f8fe0"/><path d="M2 13 L2 9 L5 6.5 L8 9 L10.5 7.5 L14 10 L14 13Z" fill="#4b4b4b"/><circle cx="7" cy="5" r="1" fill="#fff"/><path d="M3.5 4.5h2M4.5 3.5v2M11.5 4h2M12.5 3v2" stroke="#bfe3ff" stroke-width="0.8"/></svg><span class="t">Swisstopo - ch.swisstopo.vec200-hydrography</span></div>
<div class="row" style="top:882px"><div class="hl"></div><svg class="ic" width="16" height="16" viewBox="0 0 16 16"><rect x="0.5" y="1.5" width="15" height="13" fill="#fff" stroke="#8c8c8c"/><rect x="2" y="3" width="12" height="10" fill="#2f8fe0"/><path d="M2 13 L2 9 L5 6.5 L8 9 L10.5 7.5 L14 10 L14 13Z" fill="#4b4b4b"/><circle cx="7" cy="5" r="1" fill="#fff"/><path d="M3.5 4.5h2M4.5 3.5v2M11.5 4h2M12.5 3v2" stroke="#bfe3ff" stroke-width="0.8"/></svg><span class="t">Swisstopo - ch.swisstopo.vec200-landcover</span></div>
</div>
<!-- scrollbar -->
<div class="abs" style="left:574px;top:110px;width:19px;height:900px;background:#f0f0f0"></div>
<div class="abs" style="left:581px;top:755px;width:3px;height:102px;background:#888"></div>
<!-- map panel -->
<div class="abs" style="left:600px;top:44px;width:1320px;height:970px;background:#fff;border-top:1px solid #a0a0a0"></div>
<div class="abs" style="left:601px;top:45px;width:1317px;height:29px;background:#f0f0f0"></div>
<div class="abs" style="left:1918px;top:44px;width:2px;height:969px;background:#a0a0a0"></div>
<div class="abs" style="left:600px;top:1011px;width:1320px;height:2px;background:#a0a0a0"></div>
<!-- toolbar -->
<svg class="abs" style="left:612px;top:50px" width="17" height="17" viewBox="0 0 17 17"><circle cx="7" cy="7" r="5.2" fill="#fff" stroke="#00006a" stroke-width="1.2"/><path d="M4.5 7H9.5M7 4.5V9.5" stroke="#00006a" stroke-width="1.8"/><path d="M10.8 10.8L14.8 14.8" stroke="#00006a" stroke-width="1.8"/></svg>
<span class="abs" style="left:633px;top:52px">Zoom in</span>
<span class="abs" style="left:719px;top:52px;color:#a0a0a0">Zoom out</span>
<div class="abs" style="left:783px;top:48px;width:1px;height:22px;background:#b0b0b0"></div>
<div class="abs" style="left:789px;top:48px;width:90px;height:23px;background:#f5f5f5;border-top:1px solid #b0b0b0;border-left:1px solid #b0b0b0"></div>
<svg class="abs" style="left:802px;top:52px" width="14" height="16" viewBox="0 0 14 16"><path d="M3.5 9V4a1 1 0 0 1 2 0v3V2.5a1 1 0 0 1 2 0V7V3.5a1 1 0 0 1 2 0V7.5V5.5a1 1 0 0 1 2 0V11c0 2.5-1.5 4-4 4H7c-2 0-3-1-4-3L1.2 9a1 1 0 0 1 1.6-1.2z" fill="#fff" stroke="#333" stroke-width="0.9"/></svg>
<span class="abs" style="left:820px;top:53px">Pan map</span>
<svg class="abs" style="left:886px;top:51px" width="15" height="16" viewBox="0 0 15 16"><rect x="1" y="1.5" width="12.5" height="13" rx="2" fill="none" stroke="#222" stroke-width="1.2" stroke-dasharray="3.5 2.2"/></svg>
<span class="abs" style="left:906px;top:52px">Rectangle</span>
<div class="abs" style="left:977px;top:48px;width:280px;height:22px;background:#fff"></div>
<svg class="abs" style="left:1264px;top:50px" width="15" height="17" viewBox="0 0 15 17"><path d="M7.5 1V12M3.5 8L7.5 12L11.5 8M1 11.5V15H14V11.5" fill="none" stroke="#333" stroke-width="1.1"/></svg>
<span class="abs" style="left:1284px;top:52px">Download</span>
<!-- map -->
<svg class="abs" style="left:0;top:0" width="1920" height="1032" viewBox="0 0 1920 1032"><g fill="none" stroke="#bd95ee" stroke-width="2" stroke-linejoin="round" stroke-linecap="round"><polyline points="1023.4,414.4 1024.1,407.4 1029.0,401.7 1031.1,396.1 1034.6,393.3 1035.3,389.1 1043.8,387.7 1043.8,382.0 1041.6,376.4 1048.0,373.6 1058.5,377.8 1060.0,377.2"/>
<polyline points="1261.3,345.0 1264.6,342.7 1268.1,345.0"/>
<polyline points="1276.4,345.0 1280.0,344.8"/>
<polyline points="1337.7,335.0 1338.1,334.6 1338.6,335.0"/>
<polyline points="1309.0,335.0 1305.5,333.1 1300.9,328.4 1301.6,323.8 1300.9,320.7 1305.5,316.8 1310.2,313.7 1309.4,308.3 1314.0,302.1 1322.6,299.3 1328.8,298.2 1329.5,292.8 1338.1,293.5 1339.6,298.2 1341.2,308.3 1344.3,313.7 1350.5,311.4 1353.6,314.5 1354.3,319.1 1356.7,323.0"/>
<polyline points="1310.2,313.7 1319.5,311.4 1321.8,312.9 1318.7,315.2 1321.0,319.1 1325.7,317.6 1328.0,314.5 1327.2,309.8 1330.3,306.7 1331.1,297.4"/>
<polyline points="1319.5,311.4 1315.6,316.0 1311.7,324.5 1316.4,328.4 1321.8,330.0 1324.1,332.3 1323.4,335.0"/>
<polyline points="1328.0,319.9 1327.2,327.6 1333.4,330.7 1340.4,326.9 1343.5,323.0 1347.4,323.8 1356.7,323.0"/>
<polyline points="1348.9,323.8 1350.5,331.5 1354.0,335.0"/>
<polyline points="1366.7,335.0 1369.1,333.8 1370.6,329.2 1366.0,325.3 1358.2,323.0 1356.7,323.0"/>
<polyline points="1345.8,294.3 1350.5,297.4 1352.0,302.1 1353.6,304.4 1359.8,305.2 1362.1,308.3 1358.2,311.4 1358.2,316.0 1359.8,319.1 1358.2,323.0"/>
<polyline points="1345.8,294.3 1343.5,300.5 1342.7,305.2 1341.2,309.8"/>
<polyline points="1370.6,329.2 1367.5,325.3 1366.7,316.0 1372.9,311.4 1378.4,317.6 1384.6,320.7 1386.1,322.2 1383.0,325.3 1384.6,328.4 1386.1,333.1 1382.2,333.8 1377.6,328.4 1372.2,326.9"/>
<polyline points="1386.1,333.1 1389.0,335.0"/>
<polyline points="1394.2,335.0 1400.0,333.1"/>
<polyline points="1372.2,329.2 1376.7,335.0"/>
<polyline points="1338.6,335.0 1338.1,334.6"/>
<polyline points="1400.0,333.0 1406.6,330.0 1415.0,327.9 1424.9,328.6 1436.1,330.0 1448.8,337.0 1462.8,344.1 1479.7,356.7 1485.9,366.0"/>
<polyline points="1530.0,402.4 1531.8,406.0 1530.0,407.4"/>
<polyline points="1416.4,328.6 1414.3,341.3 1412.2,352.5 1410.0,362.4"/>
<polyline points="1415.0,341.3 1423.5,344.1 1429.1,349.7 1431.9,351.1 1441.7,346.9 1448.8,349.7 1454.4,353.9 1464.2,348.3"/>
<polyline points="1454.4,353.9 1455.8,360.9 1454.5,366.0"/>
<polyline points="1036.2,440.0 1035.3,445.2 1029.2,451.3 1021.3,458.3 1017.0,462.7"/>
<polyline points="1021.3,462.7 1027.4,467.0 1034.4,459.2 1041.4,462.7 1047.5,456.6 1052.7,450.5 1056.2,443.5 1062.3,445.2 1071.9,442.6 1072.8,440.0"/>
<polyline points="1017.0,462.7 1022.2,466.2 1023.9,474.9 1021.3,485.3 1031.8,480.1 1050.1,474.9 1051.0,479.2 1058.0,483.6 1060.6,492.3 1063.2,491.4 1070.2,487.1"/>
<polyline points="1069.3,481.0 1078.0,474.0 1086.7,464.4 1097.2,460.9 1106.8,459.2 1109.4,455.7 1106.8,450.5 1119.0,446.1 1130.0,440.0"/>
<polyline points="1106.8,459.2 1114.6,462.7 1116.4,466.2 1130.0,457.4"/>
<polyline points="1064.1,498.4 1071.0,495.8 1080.6,488.8 1086.7,474.0 1082.4,474.9 1071.0,484.5 1064.9,494.1 1064.1,498.4"/>
<polyline points="1071.0,488.8 1058.8,495.8 1051.8,499.3 1051.7,500.0"/>
<polyline points="1120.9,500.0 1126.0,494.9 1128.6,489.7 1124.2,483.6 1114.6,479.2 1112.9,475.7 1123.3,469.6 1130.0,466.2"/>
<polyline points="1083.2,488.0 1086.7,483.6 1097.2,478.4 1103.3,478.4 1105.9,469.6 1111.1,466.2 1117.2,466.2"/>
<polyline points="1000.0,551.9 997.2,554.5 1000.0,557.5"/>
<polyline points="1000.0,540.8 997.2,536.9 994.4,527.0 988.8,526.3 980.3,531.3 976.1,538.3 963.5,542.5 948.0,549.5 942.4,553.8 942.4,560.8 945.2,565.0 940.9,575.0"/>
<polyline points="1029.2,400.0 1028.0,405.8 1023.4,409.3 1022.8,414.5 1030.3,414.0 1040.2,412.2 1047.2,409.3 1054.2,412.2 1055.9,417.4 1053.0,422.1 1055.3,424.4 1061.2,425.6 1061.8,425.0"/>
<polyline points="1053.0,422.1 1047.2,422.1 1047.2,426.7 1042.6,430.2 1034.4,431.4 1034.4,434.9 1036.2,443.6 1029.8,450.6 1022.8,455.2 1019.9,460.0"/>
<polyline points="1071.6,425.0 1068.1,430.2 1070.5,431.4 1075.7,431.4 1075.1,436.0 1071.0,438.4 1072.2,443.0 1062.3,444.8 1057.7,443.0 1054.8,445.3 1052.4,450.0 1050.1,455.8 1044.9,457.0 1042.6,460.0"/>
<polyline points="1070.5,430.8 1081.5,430.2 1083.3,432.0 1094.9,433.1 1101.3,432.0 1105.3,427.9 1110.0,426.7"/>
<polyline points="1174.4,527.0 1174.4,527.0 1177.2,536.9 1175.8,551.0 1174.4,552.4 1163.1,555.2 1146.3,562.2 1140.0,562.2"/>
<polyline points="1207.4,527.0 1205.3,528.5 1201.1,536.9 1201.1,548.1 1206.7,555.2 1218.0,562.2 1222.2,567.8"/>
<polyline points="1254.6,527.0 1247.5,534.1 1241.9,534.1 1237.7,545.3 1236.3,552.4 1239.1,562.2 1236.3,565.0"/>
<polyline points="1330.0,510.8 1337.5,513.0 1337.5,521.4 1353.0,524.2 1355.8,528.5 1364.3,525.6 1374.1,527.0 1379.7,536.9 1400.8,528.5 1402.2,520.0 1395.2,508.8 1389.6,501.7 1388.2,491.9 1385.4,486.3 1376.9,472.2 1374.3,467.0"/>
<polyline points="1330.0,486.1 1346.0,483.4 1351.6,473.6 1353.0,468.0"/>
<polyline points="1353.9,467.0 1354.4,468.0 1357.0,467.0"/>
<polyline points="1354.4,468.0 1357.2,483.4 1362.8,490.5 1374.1,489.1 1386.8,491.9 1388.2,498.9"/>
<polyline points="1375.4,467.0 1379.7,472.2 1386.8,486.3 1388.2,491.9"/>
<polyline points="1392.4,498.9 1399.4,494.7 1402.2,483.4 1405.0,475.0"/>
<polyline points="1140.0,562.2 1146.3,562.2 1163.1,555.2 1174.4,552.4 1184.2,559.4 1198.3,563.6 1201.1,567.8 1194.1,575.0"/>
<polyline points="1198.3,565.0 1213.8,563.6 1222.2,567.8 1239.1,565.0 1250.3,570.6 1258.8,575.0"/>
<polyline points="1258.8,575.0 1268.6,570.6 1282.7,572.1 1293.9,566.4 1303.8,570.6 1308.0,575.0"/>
<polyline points="1376.9,575.0 1379.7,563.6 1388.2,559.4 1405.0,560.8"/>
<polyline points="1449.9,467.0 1449.5,468.6"/>
<polyline points="1467.4,467.0 1467.3,467.1 1473.2,471.5 1480.7,474.5 1482.2,479.0 1477.7,481.9 1482.2,487.9 1488.1,490.8 1494.0,490.8"/>
<polyline points="1499.2,467.0 1501.4,471.5 1502.9,483.4 1500.0,489.3 1494.0,492.3"/>
<polyline points="1413.8,467.0 1421.3,474.5 1442.1,476.0 1443.6,471.5 1449.5,468.6 1467.3,467.1"/>
<polyline points="1443.6,471.5 1443.6,489.3 1440.6,495.3 1434.7,498.2 1440.6,499.7 1451.0,502.7 1452.5,519.0 1454.0,532.4 1446.5,539.8 1434.7,541.3 1428.7,548.7 1422.8,542.8 1416.9,545.7 1413.9,556.1 1405.0,560.6"/>
<polyline points="1454.0,532.4 1470.3,535.3 1485.1,538.3 1492.5,542.8 1495.5,536.8 1502.9,533.9 1508.9,539.8 1514.8,545.7 1523.7,542.8 1525.2,535.3 1522.2,532.4 1519.2,530.9 1517.8,525.0 1517.8,510.1 1523.7,499.7 1525.2,493.8"/>
<polyline points="1494.0,492.3 1500.0,505.7 1507.4,515.3 1500.0,522.0 1495.5,532.4 1492.5,542.8"/>
<polyline points="1495.5,493.8 1507.4,492.3 1510.3,495.3 1519.2,493.1 1525.2,494.5 1532.6,492.3 1551.9,498.2 1568.2,504.2 1568.2,519.0 1569.7,526.4 1583.0,532.4 1593.4,535.3 1600.8,545.7 1608.3,548.7 1615.7,550.2 1632.0,544.2 1635.0,527.9 1646.8,529.4 1654.3,511.6 1661.7,508.6 1667.6,516.1 1670.6,520.5 1679.5,526.4 1676.5,548.7 1675.0,563.5 1669.1,565.0 1672.1,575.0"/>
<polyline points="1446.5,539.8 1454.0,551.7 1459.9,557.6 1470.3,562.0 1474.7,569.5 1477.7,575.0"/>
<polyline points="1479.2,575.0 1483.6,563.5 1491.1,560.6 1497.0,562.0 1498.5,575.0"/>
<polyline points="1492.5,542.8 1497.0,548.7 1498.5,563.5 1500.0,575.0"/>
<polyline points="1523.7,542.8 1535.6,545.7 1541.5,548.7 1548.9,545.7 1554.9,550.2 1553.4,559.1 1544.5,565.0 1541.5,575.0"/>
<polyline points="1608.3,548.7 1603.8,556.1 1594.9,562.0 1584.5,570.9 1580.1,575.0"/>
<polyline points="1501.4,575.0 1508.9,570.9 1517.8,571.7 1523.7,575.0"/>
<polyline points="933.9,575.0 931.1,580.6 914.2,591.9 883.3,621.4 890.3,631.3 903.0,635.5 907.2,629.9 912.8,634.1 914.2,645.3 921.3,642.5 929.7,649.5 933.9,659.4 933.9,665.0"/>
<polyline points="907.2,629.9 914.2,624.2 924.1,608.8 925.5,597.5 935.3,596.1 942.4,600.3 962.0,591.9 964.9,600.3 956.4,604.5 957.8,621.4 962.0,631.3 960.6,652.4"/>
<polyline points="888.9,631.3 880.5,642.5 876.3,652.4 877.7,658.0 874.8,663.6 893.1,676.3 907.2,682.6 911.4,677.7 924.1,667.8 933.9,665.0 939.5,663.6 957.8,653.8 987.4,653.8 1005.6,658.0 1012.7,662.2 1022.5,665.0 1032.4,665.7 1045.0,658.0"/>
<polyline points="893.1,679.1 886.1,690.3 898.8,698.8 904.4,687.5 893.1,679.1"/>
<polyline points="969.1,652.4 969.1,635.5 973.3,631.3 970.5,622.8 974.7,618.6"/>
<polyline points="978.9,652.4 978.9,639.7 987.4,631.3 994.4,620.0 1001.4,613.0 1005.6,615.8"/>
<polyline points="962.0,631.3 966.3,622.8 970.5,617.2 974.7,618.6 981.7,617.2 984.5,615.8 991.6,620.0"/>
<polyline points="962.0,591.9 966.3,598.9 973.3,591.9 976.1,590.5 977.5,583.4 980.3,577.8 984.5,584.8 988.8,582.0 997.2,580.6 1000.0,579.0"/>
<polyline points="1000.0,599.0 998.6,603.1 994.4,611.6 991.6,620.0"/>
<polyline points="1011.3,600.0 1011.3,600.3 1008.5,604.5 1008.5,621.4 1014.1,621.4 1018.3,625.6 1025.3,624.2 1022.5,628.4 1018.3,631.3 1011.3,634.1 1011.3,639.7 1008.5,645.3 1005.6,658.0"/>
<polyline points="1019.8,600.0 1019.7,600.3 1011.3,603.1"/>
<polyline points="1015.5,617.2 1019.7,611.6 1025.3,608.8 1033.8,611.6 1035.2,600.3 1036.8,600.0"/>
<polyline points="1100.7,600.0 1104.1,601.7 1102.7,605.9 1101.3,614.4 1095.7,620.0 1087.2,628.4 1084.4,631.3 1076.0,635.5 1068.9,641.1 1061.9,643.9 1053.5,646.7 1047.8,652.4 1045.0,658.0"/>
<polyline points="1033.8,611.6 1043.6,621.4 1045.0,634.1 1042.2,646.7 1045.0,658.0"/>
<polyline points="1011.3,639.7 1018.3,642.5 1023.9,636.9 1033.8,639.7 1040.8,646.7 1045.0,658.0"/>
<polyline points="1112.6,600.0 1112.5,600.3 1104.1,601.7"/>
<polyline points="1112.5,600.3 1118.2,603.1 1122.4,610.2 1125.2,620.0 1125.2,631.3 1135.0,635.5"/>
<polyline points="1087.2,628.4 1090.0,638.3 1085.8,645.3 1084.4,655.2 1080.2,659.4 1083.0,665.0 1080.2,673.5 1084.4,680.5 1084.4,687.5 1080.2,694.5 1077.4,704.4 1070.3,710.0 1064.7,715.6 1061.9,720.0"/>
<polyline points="1045.0,658.0 1047.8,662.2 1057.7,663.6 1068.9,670.6 1081.6,673.5"/>
<polyline points="1012.7,662.2 1008.5,673.5 1002.8,679.1 1008.5,687.5 1014.1,693.1 1019.7,700.2 1016.9,708.6 1009.9,720.0"/>
<polyline points="1012.7,662.2 1022.5,673.5 1026.7,683.3 1032.4,688.9 1033.8,696.0 1039.4,704.4 1042.2,715.6 1045.0,720.0"/>
<polyline points="1039.4,704.4 1036.6,712.8 1033.8,720.0"/>
<polyline points="1084.4,687.5 1092.0,681.0"/>
<polyline points="1084.4,690.3 1092.0,690.9"/>
<polyline points="1067.5,711.4 1073.2,717.1 1076.0,720.0"/>
<polyline points="1140.0,588.5 1143.4,589.1 1153.3,594.7 1158.9,593.3 1159.6,583.4 1161.7,577.8 1171.6,583.4 1180.0,590.5 1191.3,593.3 1195.5,597.5 1188.4,600.3 1181.4,600.3 1171.6,594.7 1160.3,584.8"/>
<polyline points="1181.4,590.5 1188.4,583.4 1191.3,579.2 1192.7,575.0"/>
<polyline points="1206.7,590.5 1210.9,591.9 1219.4,586.3 1234.9,577.8 1233.5,575.0 1226.4,577.8 1206.7,589.1 1206.7,590.5"/>
<polyline points="1181.4,600.3 1185.6,607.3 1192.7,614.4 1195.5,621.4 1192.7,631.3 1194.1,639.7 1195.5,645.3 1198.3,646.7 1208.1,645.3 1215.2,642.5 1219.4,638.3 1220.8,631.3 1230.6,625.6 1244.7,628.4 1260.2,635.5 1271.4,632.7 1288.3,624.2 1292.5,617.2 1295.3,605.9 1301.0,601.7 1306.6,591.9 1309.4,583.4 1308.0,575.0"/>
<polyline points="1301.0,601.7 1302.4,614.4 1302.4,622.8 1308.0,631.3 1315.0,632.7 1320.7,631.3 1322.1,621.4 1331.9,620.0 1340.3,621.4 1344.6,624.2 1351.6,620.0 1368.5,622.8 1379.7,624.2 1389.6,618.6 1395.2,610.2 1400.8,608.8 1405.0,613.0"/>
<polyline points="1350.2,620.0 1348.8,615.8 1347.4,607.3 1346.0,603.1 1350.2,590.5 1360.0,584.8 1365.7,579.2 1372.7,579.2 1375.5,575.0"/>
<polyline points="1368.5,622.8 1367.1,634.1 1374.1,636.9 1382.5,641.1 1385.4,649.5 1391.0,659.4 1399.4,670.6 1402.2,676.3 1396.6,686.1 1391.0,691.7 1393.8,701.6 1395.2,711.4 1398.0,720.0"/>
<polyline points="1399.4,672.0 1405.0,672.0"/>
<polyline points="1315.0,632.7 1306.6,642.5 1298.2,643.9 1296.7,653.8 1288.3,656.6 1281.3,663.6 1282.7,672.0 1275.6,676.3 1270.0,683.3 1264.4,691.7 1257.4,694.5 1250.3,691.7 1241.9,687.5 1227.8,683.3 1226.4,676.3 1236.3,665.0 1239.1,659.4 1232.0,648.1 1223.6,648.1 1219.4,650.9 1215.2,645.3"/>
<polyline points="1219.4,650.9 1212.4,659.4 1202.5,666.4"/>
<polyline points="1201.1,667.8 1209.5,665.0 1210.9,676.3 1205.3,684.7 1201.1,676.3 1201.1,667.8"/>
<polyline points="1135.0,635.5 1139.2,638.3 1135.0,642.5"/>
<polyline points="1135.0,653.8 1144.8,663.6 1140.6,667.8 1143.4,672.0 1140.0,673.2"/>
<polyline points="1144.8,663.6 1157.5,658.0 1173.0,663.6 1184.2,656.6 1196.9,648.1"/>
<polyline points="1173.0,663.6 1171.6,673.5 1180.0,677.7 1181.4,687.5 1180.0,701.6 1181.4,712.8 1182.8,720.0"/>
<polyline points="1143.4,672.0 1146.3,677.7 1147.7,690.3 1150.5,698.8 1161.7,707.2 1165.9,720.0"/>
<polyline points="1203.9,684.7 1203.9,691.7 1198.3,697.4 1196.9,704.4 1188.4,710.0 1184.2,715.6"/>
<polyline points="1203.9,691.7 1213.8,696.0 1220.8,703.0 1223.6,720.0"/>
<polyline points="1239.1,659.4 1243.3,662.2 1246.1,670.6 1253.1,673.5 1258.8,681.9 1264.4,691.7"/>
<polyline points="1257.4,694.5 1247.5,701.6 1243.3,707.2 1250.3,714.2 1254.5,720.0"/>
<polyline points="1296.7,653.8 1310.8,652.4 1323.5,646.7 1334.7,642.5 1353.0,649.5 1358.6,659.4 1361.4,666.4 1351.6,686.1 1355.8,691.7 1365.7,698.8 1369.9,708.6 1371.3,720.0"/>
<polyline points="1310.8,652.4 1310.8,673.5 1306.6,691.7 1308.0,705.8 1317.8,720.0"/>
<polyline points="1308.0,707.2 1327.7,703.0 1338.9,704.4 1346.0,711.4 1360.0,720.0"/>
<polyline points="1361.4,666.4 1374.1,670.6 1382.5,680.5 1386.8,690.3 1391.0,691.7"/>
<polyline points="1396.6,704.4 1405.0,701.6"/>
<polyline points="1477.7,575.0 1473.2,585.4 1467.3,594.3 1470.3,604.7 1464.3,610.6 1464.3,618.0 1452.5,622.5 1434.7,631.4 1425.8,638.8 1416.9,640.3 1413.9,634.3 1412.4,625.4 1416.9,618.0 1412.4,613.6 1405.0,612.1"/>
<polyline points="1416.9,640.3 1419.8,647.7 1425.8,647.7 1439.1,641.8 1458.4,635.8 1461.4,643.2 1474.7,640.3 1477.7,644.7 1483.6,650.7 1491.1,647.7 1491.1,641.8 1494.0,640.3 1492.5,652.2 1492.5,664.0 1494.0,675.9 1502.9,687.8 1508.9,693.7 1523.7,698.1 1532.6,693.7 1538.5,696.7 1541.5,681.8 1550.4,684.8 1562.3,678.9 1574.1,674.4 1583.0,674.4 1594.9,661.1 1599.4,656.6 1597.9,631.4 1606.8,622.5 1609.7,612.1 1603.8,607.6 1584.5,594.3 1581.6,589.8 1580.1,575.0"/>
<polyline points="1425.8,647.7 1425.8,658.1 1424.3,671.4 1421.3,681.8 1421.3,693.7 1425.8,708.5 1428.7,720.0"/>
<polyline points="1405.0,670.0 1413.9,668.5 1424.3,671.4"/>
<polyline points="1405.0,701.1 1418.4,695.2 1421.3,693.7"/>
<polyline points="1458.4,635.8 1456.9,646.2 1455.4,658.1 1459.9,667.0 1461.4,681.8 1459.9,693.7 1452.5,708.5 1445.1,720.0"/>
<polyline points="1492.5,664.0 1501.4,659.6 1504.4,667.0 1507.4,672.9 1517.8,665.5 1523.7,667.0 1538.5,658.1 1541.5,638.8 1535.6,634.3 1535.6,631.4 1559.3,622.5 1560.8,618.0 1569.7,609.1 1566.7,594.3 1581.6,589.8"/>
<polyline points="1501.4,575.0 1498.5,586.9 1500.0,598.7 1498.5,619.5 1498.5,634.3 1505.9,643.2 1516.3,649.2 1519.2,656.6 1520.7,667.0"/>
<polyline points="1531.1,575.0 1529.6,580.9 1535.6,586.9 1538.5,594.3 1543.0,591.3 1553.4,595.8 1562.3,592.8 1568.2,592.8 1581.6,589.8"/>
<polyline points="1609.7,612.1 1630.5,607.6 1635.0,612.1 1636.5,621.0 1645.4,628.4 1657.2,628.4 1673.5,632.9 1678.0,616.5 1679.5,610.6 1672.1,604.7 1663.2,604.7 1660.2,592.8 1666.1,582.4 1672.1,575.0"/>
<polyline points="1599.4,658.1 1602.3,662.5 1615.7,661.1 1620.1,667.0 1615.7,672.9 1609.7,686.3 1618.6,696.7 1623.1,705.6 1615.7,714.5 1600.8,714.5 1599.4,705.6 1590.5,699.6 1589.0,687.8 1583.0,674.4"/>
<polyline points="1008.9,720.0 1010.3,725.6 1007.5,729.8 1006.1,735.5 1010.3,738.3 1017.3,738.3 1025.8,741.1 1023.0,748.1 1021.6,759.4 1024.4,762.2 1032.8,756.6 1035.6,760.8 1044.1,773.4 1051.1,779.1 1046.9,781.9 1051.1,790.3 1055.3,798.8 1063.8,810.0 1072.2,805.8 1080.6,810.0 1086.3,803.0 1091.9,801.6 1097.5,794.5 1108.8,797.4 1114.4,800.2 1124.2,794.5 1131.3,788.9 1134.1,784.7 1142.5,784.7 1145.3,777.7 1151.0,776.3 1151.0,781.9 1166.4,781.9 1176.3,793.1 1191.8,794.5 1203.0,794.5 1205.8,780.5 1212.8,774.9 1226.9,773.4 1232.5,762.2 1232.5,748.1 1226.9,734.1 1224.1,720.0"/>
<polyline points="1017.3,738.3 1025.8,734.1 1034.2,728.4 1035.6,720.0"/>
<polyline points="1035.6,760.8 1038.4,753.8 1049.7,743.9 1056.7,738.3 1060.9,731.3 1059.5,720.0"/>
<polyline points="1046.9,720.0 1051.1,724.2 1058.1,721.4"/>
<polyline points="1051.1,779.1 1052.5,767.8 1060.9,759.4 1063.8,750.9 1072.2,743.9 1086.3,741.1 1094.7,746.7 1106.0,753.8 1110.2,760.8 1113.0,769.2 1117.2,774.9 1127.1,777.7 1134.1,784.7"/>
<polyline points="1076.4,720.0 1086.3,725.6 1092.0,728.9"/>
<polyline points="1097.4,740.0 1097.5,741.1 1094.7,746.7"/>
<polyline points="1108.8,740.0 1108.8,755.2 1110.2,760.8"/>
<polyline points="1140.0,736.6 1143.9,742.5 1153.8,758.0 1156.6,765.0 1153.8,773.4 1149.6,777.7"/>
<polyline points="1156.6,765.0 1166.4,763.6 1172.1,755.2 1174.9,746.7 1179.1,741.1 1177.7,720.0"/>
<polyline points="1165.0,720.0 1165.0,728.4 1167.8,739.7 1174.9,745.3"/>
<polyline points="1232.5,746.7 1245.2,745.3 1249.4,738.3 1255.0,736.9"/>
<polyline points="1323.9,720.0 1332.4,729.8 1336.6,735.5 1339.4,741.1 1346.4,742.5 1356.3,748.1 1361.9,742.5 1367.5,748.1 1374.5,748.1 1383.0,753.8"/>
<polyline points="1356.3,720.0 1364.7,723.5 1370.3,721.4"/>
<polyline points="1395.6,720.0 1395.6,731.3 1398.5,735.5"/>
<polyline points="1395.6,797.4 1394.2,804.4 1397.1,808.6 1392.8,815.6 1402.7,817.0 1411.1,821.3 1415.3,818.5 1418.2,810.0 1425.2,800.2 1421.0,795.9 1412.5,791.7 1408.3,797.4 1404.1,791.7 1401.3,790.3 1399.9,795.9 1395.6,797.4"/>
<polyline points="1391.4,794.5 1390.0,787.5 1384.4,783.3 1377.4,777.7 1370.3,776.3 1371.7,769.2 1378.8,762.2 1383.0,753.8 1385.8,748.1 1391.4,734.1 1398.5,735.5 1404.1,741.1 1406.9,742.5 1419.6,739.7 1422.4,741.1 1425.2,750.9 1423.8,756.6 1415.3,759.4 1411.1,763.6 1411.1,770.6 1413.9,776.3 1408.3,780.5 1411.1,784.7 1412.5,791.7"/>
<polyline points="1402.7,777.7 1404.1,781.9 1402.7,783.3 1401.3,780.5 1402.7,777.7"/>
<polyline points="1422.4,741.1 1435.0,731.3 1443.5,728.4 1444.9,720.0"/>
<polyline points="1429.4,720.0 1435.0,727.0 1437.8,729.8"/>
<polyline points="1254.6,720.4 1256.5,726.0 1254.6,734.0 1255.6,736.4"/>
<polyline points="1134.5,642.4 1133.6,648.0 1134.6,653.0"/>
<polyline points="1130.0,379.4 1136.2,376.2 1139.4,374.2 1136.2,371.0 1136.2,364.8 1145.6,358.5 1147.7,362.7 1151.9,367.9 1156.0,361.7 1159.2,359.1 1165.4,364.8 1174.8,363.8 1184.2,361.7 1191.5,357.5 1194.6,351.2 1205.0,351.2 1210.2,354.4 1211.2,361.7 1218.5,360.6 1227.9,359.6 1236.2,358.5 1242.5,358.5 1245.6,353.3 1251.9,351.2 1255.0,350.2 1258.1,347.1 1261.3,345.0"/>
<polyline points="1268.5,345.0 1268.5,345.0 1277.9,345.0 1281.0,350.2 1285.2,355.4 1290.0,355.9"/>
<polyline points="1130.0,386.7 1142.5,384.6 1150.8,387.7 1155.0,390.8 1156.0,384.6 1157.1,379.4 1163.3,378.3 1166.5,364.8"/>
<polyline points="1156.0,384.6 1155.0,391.9 1155.0,397.1 1160.2,399.2 1168.5,397.1 1173.8,396.0 1185.2,390.8 1188.3,381.5 1189.4,374.2 1188.3,370.0 1180.0,366.9 1174.8,363.8"/>
<polyline points="1163.3,378.3 1171.7,381.5 1172.7,384.6 1169.6,392.9 1168.5,397.1"/>
<polyline points="1130.0,402.3 1138.3,404.4 1145.6,401.2 1148.8,396.0 1150.8,392.9 1155.0,391.9"/>
<polyline points="1130.0,409.6 1140.4,411.7 1144.6,416.9 1147.7,424.2"/>
<polyline points="1160.2,399.2 1161.2,406.5 1160.2,411.7 1152.9,415.8 1146.7,419.0 1143.5,427.0"/>
<polyline points="1161.2,406.5 1166.5,409.6 1175.8,409.6 1180.0,415.8 1188.3,417.9 1190.4,413.8"/>
<polyline points="1196.7,409.6 1202.9,408.5 1212.3,400.2 1218.5,397.1 1226.9,399.2 1231.0,403.3 1230.0,410.6 1223.8,413.8 1219.6,412.7 1212.3,411.7 1202.9,411.7 1196.7,409.6"/>
<polyline points="1190.4,413.8 1188.3,419.0 1179.0,424.2 1174.8,427.0"/>
<polyline points="1185.2,390.8 1194.6,397.1 1197.7,403.3 1197.7,409.6"/>
<polyline points="1188.3,374.2 1198.8,365.8 1202.9,369.0 1212.3,380.4 1215.4,379.4 1219.6,374.2 1222.7,370.0 1218.5,363.8 1218.5,360.6"/>
<polyline points="1215.4,379.4 1216.5,384.6 1220.6,385.6 1221.7,392.9 1218.5,395.0 1221.7,397.1"/>
<polyline points="1221.7,392.9 1231.0,391.9 1232.1,385.6 1238.3,384.6 1244.6,385.6 1239.4,390.8 1238.3,395.0 1244.6,398.1 1247.7,399.2 1255.0,392.9 1258.1,391.9 1264.4,396.0 1268.5,395.0 1272.7,392.9 1271.7,386.7 1268.5,382.5 1268.5,366.9 1263.3,361.7 1257.1,360.6 1255.0,350.2"/>
<polyline points="1244.6,385.6 1247.7,378.3 1247.7,371.0 1256.0,367.9 1259.2,364.8 1257.1,360.6"/>
<polyline points="1268.5,366.9 1275.8,363.8 1277.9,371.0 1286.2,373.1 1290.0,372.6"/>
<polyline points="1295.9,390.0 1296.7,392.9 1294.6,401.2 1292.5,405.4"/>
<polyline points="1283.1,406.5 1284.2,408.5 1295.6,407.5 1300.8,413.8 1302.9,420.0 1305.0,427.0"/>
<polyline points="1266.5,397.1 1268.5,403.3 1267.5,411.7 1266.5,417.9 1269.6,427.0"/>
<polyline points="1244.6,398.1 1247.7,403.3 1250.8,411.7 1252.9,417.9 1256.0,424.2 1258.1,427.0"/>
<polyline points="1230.0,406.5 1232.1,414.8 1234.2,420.0 1234.2,427.0"/>
<polyline points="1242.5,427.0 1244.6,420.0 1250.8,419.0 1256.0,424.2"/>
<polyline points="1268.5,401.2 1275.8,400.2 1280.0,403.3 1283.1,407.5"/>
<polyline points="1295.6,392.9 1302.9,391.9 1311.2,392.9 1317.5,395.0 1327.9,392.9 1330.0,395.0"/>
<polyline points="1327.2,390.0 1327.9,392.9"/>
<polyline points="1311.2,392.9 1311.2,401.2 1307.1,406.5 1311.2,411.7 1313.3,417.9 1315.4,427.0"/>
<polyline points="1275.8,417.9 1280.0,416.9 1286.2,420.0 1292.5,424.2 1296.7,427.0"/>
<polyline points="1325.8,419.0 1330.0,415.8"/>
<polyline points="1305.8,399.7 1306.2,400.2"/>
<polyline points="1130.0,427.3 1134.2,428.3 1138.2,427.0"/>
<polyline points="1130.0,439.8 1135.2,440.8 1141.5,436.7 1150.8,434.6 1161.2,432.5 1169.6,430.4 1175.3,427.0"/>
<polyline points="1150.8,434.6 1152.9,442.9 1157.1,447.1 1161.2,449.2 1165.4,456.5 1167.5,463.8 1164.4,465.8 1163.3,472.1 1169.6,473.1 1173.8,476.2 1179.0,482.5 1185.2,484.6 1190.4,483.5 1191.5,492.9 1201.9,495.0 1209.2,505.4 1216.5,508.5 1218.5,511.7 1215.4,519.0 1211.2,527.0"/>
<polyline points="1167.5,465.8 1171.7,466.9 1169.6,467.9 1167.5,465.8"/>
<polyline points="1130.0,478.3 1136.2,475.2 1139.4,471.0 1140.4,466.9 1147.7,464.8 1152.9,467.9 1161.2,467.9 1164.4,465.8"/>
<polyline points="1137.3,454.4 1141.5,451.2 1143.5,453.3 1139.4,456.5 1137.3,454.4"/>
<polyline points="1130.0,467.9 1134.2,463.8 1132.1,459.6"/>
<polyline points="1138.3,476.2 1145.6,487.7 1143.5,492.9 1140.4,500.2 1143.5,506.5 1142.5,513.8 1150.8,512.7 1161.2,513.8 1165.4,517.9 1171.7,517.9 1172.7,527.0"/>
<polyline points="1195.3,427.0 1196.7,430.4 1194.6,434.6 1194.6,439.8 1196.7,446.0 1202.9,458.5 1205.0,463.8 1206.0,472.1 1202.9,478.3 1204.0,487.7 1201.9,495.0"/>
<polyline points="1196.7,446.0 1209.2,444.0 1214.4,445.0 1218.5,440.8 1217.5,435.6 1225.8,433.5 1230.0,441.9 1231.0,445.0 1234.2,449.2 1236.2,454.4 1234.2,459.6 1237.3,465.8 1230.0,474.2 1233.1,480.4 1239.4,483.5 1240.4,488.8 1238.3,492.9 1230.0,497.1 1231.0,500.2 1219.6,503.3 1216.5,508.5"/>
<polyline points="1196.7,430.4 1200.8,427.0"/>
<polyline points="1231.0,445.0 1239.4,440.8 1242.5,438.8 1247.7,441.9 1257.1,442.9 1259.2,446.0 1258.1,449.2 1263.3,448.1 1266.5,444.0 1267.5,434.6 1266.5,428.3 1265.1,427.0"/>
<polyline points="1233.0,427.0 1233.1,427.3 1240.4,431.5 1242.5,438.8"/>
<polyline points="1240.4,488.8 1243.5,492.9 1252.9,497.1 1264.4,489.8 1268.5,486.7 1269.6,472.1 1267.5,463.8 1267.5,451.2 1266.5,444.0"/>
<polyline points="1268.5,434.6 1273.8,430.4 1277.2,427.0"/>
<polyline points="1270.3,427.0 1273.8,430.4"/>
<polyline points="1273.8,432.5 1280.0,436.7 1284.2,446.0 1288.3,459.6 1292.5,467.9 1299.8,472.1 1300.8,463.8 1298.8,451.2 1300.8,440.8 1297.7,432.5 1295.3,427.0"/>
<polyline points="1298.8,432.5 1304.3,427.0"/>
<polyline points="1300.8,447.1 1307.1,450.2 1315.4,452.3 1325.8,449.2 1330.0,448.1"/>
<polyline points="1319.4,427.0 1319.6,428.3 1323.8,438.8 1330.0,445.0"/>
<polyline points="1299.8,472.1 1300.8,476.2 1292.5,478.3 1286.2,484.6 1280.0,489.8 1272.7,490.8 1265.4,488.8"/>
<polyline points="1268.5,488.8 1270.6,492.9 1271.7,497.1 1277.9,496.0 1282.1,501.2 1289.4,498.1 1291.5,494.0 1287.3,490.8 1280.0,489.8"/>
<polyline points="1300.8,475.2 1307.1,476.2 1313.3,477.3 1317.5,484.6 1330.0,483.5"/>
<polyline points="1301.9,482.5 1298.8,490.8 1311.2,492.9 1315.4,487.7 1317.5,484.6"/>
<polyline points="1311.2,492.9 1317.5,501.2 1327.9,503.3 1327.9,510.6 1319.6,511.7 1315.4,509.6 1313.3,504.4 1306.0,503.3 1294.6,504.4 1288.3,510.6 1277.9,511.7 1268.5,512.7 1265.4,515.8 1257.1,517.9 1252.9,508.5 1252.9,497.1"/>
<polyline points="1296.7,506.5 1304.0,507.5 1302.9,509.6 1296.7,508.5 1296.7,506.5"/>
<polyline points="1319.6,511.7 1322.7,514.8 1330.0,513.8"/>
<polyline points="1255.0,517.9 1255.0,527.0"/>
<polyline points="1370.4,390.0 1371.7,391.2 1377.9,391.2 1382.1,395.4 1384.2,398.5 1388.3,399.6 1394.6,402.7 1398.8,407.9"/>
<polyline points="1391.4,390.0 1391.5,390.2 1392.5,399.6 1394.6,402.7"/>
<polyline points="1410.2,366.2 1412.3,369.4 1421.7,369.4 1425.8,371.5 1425.8,375.6 1421.7,376.7 1411.2,377.7 1410.2,381.9 1413.3,384.0 1416.5,388.1 1418.5,390.2 1409.2,392.3 1405.0,397.5 1402.9,403.8 1398.8,407.9"/>
<polyline points="1418.5,390.2 1422.7,396.5 1427.9,399.6 1434.2,402.7 1440.4,406.9 1445.6,413.1 1445.6,416.2 1449.8,419.4 1447.7,423.5 1447.7,430.8 1446.7,435.0 1450.8,437.1 1458.1,438.1 1466.5,441.2 1470.6,443.3 1479.0,446.5 1481.0,451.7 1479.0,457.9 1473.8,461.0 1468.5,467.0"/>
<polyline points="1421.7,376.7 1430.0,379.8 1438.3,375.6 1444.6,378.8 1452.9,381.9 1452.9,388.1 1448.8,391.2 1448.8,401.7 1452.9,401.7 1460.2,401.7 1466.5,401.7 1475.8,399.6 1486.2,398.5 1487.3,394.4 1484.2,386.0 1481.0,379.8 1475.8,372.5 1471.7,370.4 1464.4,369.4 1458.5,366.0"/>
<polyline points="1448.8,401.7 1446.7,406.9 1445.6,413.1"/>
<polyline points="1452.9,381.9 1463.3,379.8 1465.4,373.5 1459.2,371.5 1460.2,369.4"/>
<polyline points="1481.9,366.0 1482.1,366.2 1488.3,370.4 1484.2,376.7 1482.1,380.8"/>
<polyline points="1488.3,370.4 1492.5,376.7 1500.8,379.8 1509.2,376.7 1511.2,374.6 1515.4,380.8 1521.7,389.2 1525.8,387.1 1527.9,391.2 1527.9,401.7 1530.0,402.7"/>
<polyline points="1488.3,390.2 1496.7,387.1 1507.1,384.0 1515.4,382.9 1523.8,390.2"/>
<polyline points="1489.4,392.3 1494.6,397.5 1500.8,401.7 1509.2,398.5 1517.5,396.5 1519.6,391.2 1515.4,387.1"/>
<polyline points="1471.7,401.7 1473.8,407.9 1475.8,412.1 1466.5,422.5 1466.5,432.9 1470.6,443.3"/>
<polyline points="1475.8,405.8 1484.2,407.9 1490.4,413.1 1496.7,415.2 1500.8,413.1 1500.8,403.8 1501.9,401.7"/>
<polyline points="1500.8,413.1 1498.8,426.7 1497.7,434.0 1493.5,439.2 1482.1,444.4 1479.0,446.5"/>
<polyline points="1497.7,434.0 1505.0,437.1 1500.8,447.5 1497.7,457.9 1497.7,467.0"/>
<polyline points="1505.0,437.1 1512.3,426.7 1517.5,418.3 1522.7,411.0 1530.0,409.0"/>
<polyline points="1398.8,407.9 1402.9,415.2 1405.0,422.5 1411.2,428.8 1416.5,432.9 1418.5,438.1 1426.9,445.4 1429.0,452.7 1432.1,459.0 1440.4,459.0 1448.8,461.0 1450.8,464.2 1450.8,467.0"/>
<polyline points="1405.0,422.5 1400.8,428.8 1397.7,432.9 1397.7,439.2 1388.3,442.3 1380.0,442.3 1372.7,443.3 1369.6,440.2 1364.4,437.1 1360.2,432.9"/>
<polyline points="1360.2,432.9 1363.3,422.5 1364.4,414.2 1361.2,405.8 1358.1,403.8 1352.9,399.6 1343.5,395.4 1338.3,395.4 1334.2,401.7 1337.3,410.0 1340.4,414.2 1344.6,422.5 1346.7,427.7 1352.9,434.0 1360.2,432.9"/>
<polyline points="1364.4,414.2 1371.7,417.3 1376.9,416.2 1383.1,412.1 1392.5,414.2 1396.7,410.0 1398.8,407.9"/>
<polyline points="1347.8,390.0 1347.7,390.2 1343.5,395.4"/>
<polyline points="1330.0,396.5 1336.2,399.6 1334.2,401.7"/>
<polyline points="1330.0,422.5 1334.2,430.8 1341.5,437.1 1350.8,441.2 1357.1,444.4 1364.4,446.5 1372.7,445.4"/>
<polyline points="1330.0,430.8 1336.2,437.1 1345.6,442.3 1350.8,447.5 1356.0,453.8"/>
<polyline points="1330.0,447.5 1336.2,453.8 1340.4,460.0 1345.6,464.2 1348.8,467.0"/>
<polyline points="1372.7,443.3 1373.8,450.6 1379.0,452.7 1392.5,451.7 1404.0,450.6 1402.9,459.0 1409.2,463.1 1413.3,467.0"/>
<polyline points="1373.8,450.6 1364.4,450.6 1356.0,453.8 1350.8,460.0 1352.9,467.0"/>
<polyline points="1372.7,451.7 1371.7,460.0 1373.8,467.0"/>
<polyline points="1345.6,410.0 1348.8,407.9 1351.9,412.1 1354.0,418.3 1355.0,421.5 1352.9,422.5 1350.8,418.3 1346.7,414.2 1345.6,410.0"/>
<polyline points="1060.0,376.8 1064.7,376.0 1068.5,373.7 1074.0,377.6 1080.9,376.8 1077.1,379.1 1076.3,390.0 1080.2,391.5 1086.4,391.5 1089.5,395.4"/>
<polyline points="1089.5,395.4 1085.6,400.8 1086.4,405.5 1082.5,410.9 1077.8,416.3 1073.2,421.0 1070.1,425.0"/>
<polyline points="1060.0,425.0 1064.7,421.7 1070.1,418.6 1073.2,421.0"/>
<polyline points="1089.5,395.4 1094.9,392.3 1104.2,390.7 1109.6,393.1 1115.0,393.8 1122.0,389.2 1124.3,385.3 1122.0,379.1 1123.6,376.0 1130.0,378.9"/>
<polyline points="1104.2,391.5 1110.4,397.7 1119.7,404.7 1120.5,407.8 1125.9,408.6 1129.8,410.1 1130.0,410.1"/>
<polyline points="1115.0,394.6 1115.8,397.7 1122.0,399.3 1126.7,397.7 1126.7,391.5 1123.6,389.2"/>
<polyline points="1126.7,386.9 1130.0,386.3"/>
<polyline points="1122.0,406.2 1125.9,402.4 1130.0,402.4"/>
<polyline points="1050.4,500.0 1049.9,506.8 1053.3,511.6 1053.8,514.5"/>
<polyline points="1000.0,552.3 1020.3,532.9 1032.0,520.3 1045.5,512.6 1053.8,514.5 1062.0,514.5 1073.6,511.6 1082.4,507.3 1085.3,509.7 1087.2,513.6 1091.1,516.5 1095.0,511.6 1097.9,507.8 1106.6,503.9 1116.3,502.9 1123.1,500.0"/>
<polyline points="1053.8,514.5 1055.2,517.4 1055.2,524.2 1058.1,530.0 1061.0,533.9 1056.2,539.7 1055.2,545.5 1053.3,549.4"/>
<polyline points="1087.2,513.6 1081.4,519.4 1082.4,525.2 1086.2,527.1 1084.3,529.1 1082.4,532.9 1080.4,536.8 1077.5,542.6 1071.7,550.4"/>
<polyline points="1083.3,534.9 1093.0,536.8 1108.5,538.8 1109.5,545.5 1102.7,546.5 1100.8,549.4 1103.7,552.3 1099.8,563.0 1097.9,569.8 1098.8,581.4 1102.7,585.3 1111.4,589.1 1113.4,600.0"/>
<polyline points="1053.3,549.4 1060.1,550.4 1069.8,551.4 1076.6,558.1 1080.4,567.8 1079.5,574.6 1084.3,580.4 1083.3,587.2 1087.2,587.2 1092.1,595.9 1095.9,600.0"/>
<polyline points="1053.3,549.4 1050.4,554.3 1045.5,560.1 1040.7,567.8 1040.7,574.6 1045.5,582.4 1050.4,592.1"/>
<polyline points="1050.4,592.1 1054.3,589.1 1064.0,584.3 1071.7,585.3 1080.4,588.2 1083.3,587.2"/>
<polyline points="1050.4,592.1 1046.5,596.9 1043.6,600.0"/>
<polyline points="1020.3,532.9 1024.2,537.8 1028.1,543.6 1031.0,548.4 1028.1,555.2 1030.0,561.0 1025.2,566.9 1017.4,566.9 1009.7,566.9 1003.9,560.1 1000.0,556.2"/>
<polyline points="1026.2,529.1 1031.0,534.9 1036.8,541.7 1040.7,546.5 1038.8,556.2 1038.8,564.0 1032.0,571.7 1029.1,576.6 1023.3,584.3 1019.4,593.0 1014.5,600.0"/>
<polyline points="1032.9,521.3 1040.7,529.1 1044.6,538.8 1049.4,542.6 1053.3,548.4"/>
<polyline points="1000.0,563.0 1006.8,567.8 1003.9,575.6 1000.0,582.4"/>
<polyline points="1006.8,567.8 1012.6,567.8 1023.3,575.6 1020.3,581.4 1014.5,579.5 1007.8,583.3 1003.9,589.1 1000.0,596.9"/>
<polyline points="1064.9,531.0 1069.8,532.0 1067.8,536.8 1064.9,533.9 1064.9,531.0"/>
<polyline points="1084.3,526.2 1087.2,527.1 1085.3,529.1 1084.3,526.2"/>
<polyline points="1113.4,595.0 1121.1,590.1 1128.9,586.2 1140.0,587.2"/>
<polyline points="1128.9,585.3 1128.9,574.6 1131.8,567.8 1133.7,562.0 1140.0,561.0"/>
<polyline points="1311.7,335.0 1312.7,337.0 1317.1,335.7 1324.0,335.1 1324.0,335.0"/>
<polyline points="1340.4,335.0 1340.4,336.3 1337.9,337.6 1335.4,336.3 1335.8,335.0"/>
<polyline points="1336.0,337.6 1336.6,343.9 1333.5,348.3"/>
<polyline points="1333.5,348.3 1330.3,350.2 1327.8,352.1 1325.3,351.5 1324.0,354.0 1326.5,360.3 1328.4,360.9 1330.3,356.5 1332.2,350.2 1333.5,348.3"/>
<polyline points="1290.0,355.9 1296.3,357.1 1299.4,354.0 1303.9,356.5 1310.2,355.9 1315.2,353.3 1315.2,351.5 1310.8,350.2 1309.5,347.7 1314.6,343.3 1320.9,338.9 1327.8,341.4 1330.3,343.9 1330.9,347.7 1330.3,350.2"/>
<polyline points="1302.6,356.5 1302.6,361.5 1299.4,365.9 1295.7,369.7 1293.8,371.6 1290.0,371.6"/>
<polyline points="1292.5,372.2 1293.8,379.8 1295.0,384.8 1296.9,390.0"/>
<polyline points="1310.2,355.9 1310.8,359.0 1317.1,362.8 1316.5,367.8 1315.2,374.1 1317.7,374.8 1323.4,377.3 1326.5,381.7 1327.2,390.0"/>
<polyline points="1330.3,357.8 1335.4,362.2 1337.9,365.3 1342.3,367.2 1344.8,362.8 1344.8,359.0 1348.6,358.4 1351.1,360.9 1354.3,356.5 1356.1,353.3 1365.6,355.9 1366.2,350.8 1362.4,348.9 1361.2,345.2 1363.1,342.0 1366.9,343.9 1371.9,347.7 1373.8,343.9 1377.6,337.0 1376.3,335.1 1376.2,335.0"/>
<polyline points="1337.9,367.8 1339.8,371.6 1342.3,374.8 1346.1,376.7 1346.1,381.7 1348.0,385.5 1353.0,383.6 1356.8,386.1 1363.7,383.6 1370.6,388.0 1371.9,390.0"/>
<polyline points="1349.2,385.5 1348.0,390.0"/>
<polyline points="1352.4,335.0 1353.0,335.7 1358.0,337.0 1363.7,337.0 1366.8,335.0"/>
<polyline points="1388.9,335.0 1390.8,336.3 1395.3,335.0"/>
<polyline points="1366.2,350.8 1373.1,352.7 1374.4,355.2 1379.4,355.9 1381.3,359.0 1378.2,361.5 1379.4,365.3 1381.3,367.2 1388.3,367.2 1390.8,365.3 1392.7,366.6 1392.7,370.4 1397.1,372.2 1403.4,371.0 1403.4,368.5 1410.0,365.3"/>
<polyline points="1390.8,365.3 1390.2,370.4 1389.5,379.2 1387.6,381.7 1391.4,388.0 1392.0,390.0"/>
<polyline points="1092.0,679.2 1092.1,678.8 1100.8,675.9 1102.7,681.7 1109.5,680.7 1116.3,675.9 1125.0,672.0 1132.8,672.9 1140.0,673.9"/>
<polyline points="1110.5,681.7 1114.3,686.5 1116.3,694.3 1116.3,702.0 1119.2,707.8 1122.1,700.1 1126.0,689.4 1123.1,680.7 1126.0,674.9 1129.8,672.9"/>
<polyline points="1119.2,707.8 1113.4,713.6 1111.4,725.3 1108.5,740.0"/>
<polyline points="1119.2,708.8 1126.0,709.8 1133.7,713.6 1140.0,719.4"/>
<polyline points="1092.0,690.9 1099.8,691.4 1104.7,697.2 1102.7,704.0 1099.8,715.6 1103.7,719.5 1106.6,722.4 1110.5,725.3"/>
<polyline points="1140.0,724.4 1138.6,732.1 1140.0,739.9"/>
<polyline points="1092.0,728.9 1096.9,732.1 1098.4,740.0"/>
<polyline points="1135.0,653.8 1134.6,653.0"/>
<polyline points="1405.0,613.0 1405.0,612.1"/>
<polyline points="1165.9,720.0 1165.0,720.0"/>
<polyline points="1449.9,467.0 1450.8,467.0"/>
<polyline points="1009.9,720.0 1008.9,720.0"/>
<polyline points="1410.2,366.2 1410.0,365.3"/>
<polyline points="1290.0,372.6 1290.0,371.6"/>
<polyline points="1295.9,390.0 1296.9,390.0"/>
<polyline points="1097.4,740.0 1098.4,740.0"/>
<polyline points="1353.0,468.0 1352.9,467.0"/>
<polyline points="1394.2,335.0 1395.3,335.0"/>
<polyline points="1234.2,427.0 1233.0,427.0"/>
<polyline points="1140.0,562.2 1140.0,561.0"/>
<polyline points="1467.4,467.0 1468.5,467.0"/>
<polyline points="1140.0,588.5 1140.0,587.2"/>
<polyline points="1000.0,557.5 1000.0,556.2"/>
<polyline points="1051.7,500.0 1050.4,500.0"/>
<polyline points="1296.7,427.0 1295.3,427.0"/>
<polyline points="1194.1,575.0 1192.7,575.0"/>
<polyline points="1376.9,575.0 1375.5,575.0"/>
<polyline points="1330.0,395.0 1330.0,396.5"/>
<polyline points="1499.2,467.0 1497.7,467.0"/>
<polyline points="1370.4,390.0 1371.9,390.0"/>
<polyline points="1354.0,335.0 1352.4,335.0"/>
<polyline points="1071.6,425.0 1070.1,425.0"/>
<polyline points="1530.0,407.4 1530.0,409.0"/>
<polyline points="1174.4,527.0 1172.7,527.0"/>
<polyline points="1371.3,720.0 1370.3,721.4"/>
<polyline points="1338.6,335.0 1340.4,335.0"/>
<polyline points="1130.0,466.2 1130.0,467.9"/>
<polyline points="1092.0,681.0 1092.0,679.2"/>
<polyline points="1061.8,425.0 1060.0,425.0"/>
<polyline points="1045.0,720.0 1046.9,720.0"/>
<polyline points="1033.8,720.0 1035.6,720.0"/>
<polyline points="1337.7,335.0 1335.8,335.0"/>
<polyline points="1000.0,599.0 1000.0,596.9"/>
<polyline points="1405.0,672.0 1405.0,670.0"/>
<polyline points="1120.9,500.0 1123.1,500.0"/>
<polyline points="1398.0,720.0 1395.6,720.0"/>
<polyline points="1061.9,720.0 1059.5,720.0"/>
<polyline points="1330.0,486.1 1330.0,483.5"/>
<polyline points="1309.0,335.0 1311.7,335.0"/>
<polyline points="1330.0,510.8 1330.0,513.8"/>
<polyline points="1130.0,457.4 1132.1,459.6"/>
<polyline points="1021.3,462.7 1019.9,460.0"/>
<polyline points="1011.3,600.0 1014.5,600.0"/>
<polyline points="1140.0,736.6 1140.0,739.9"/>
<polyline points="1000.0,579.0 1000.0,582.4"/>
<polyline points="1338.1,334.6 1336.0,337.6"/>
<polyline points="1360.0,720.0 1356.3,720.0"/>
<polyline points="1207.4,527.0 1211.2,527.0"/>
<polyline points="1454.5,366.0 1458.5,366.0"/>
<polyline points="1315.4,427.0 1319.4,427.0"/>
<polyline points="1485.9,366.0 1481.9,366.0"/>
<polyline points="1100.7,600.0 1095.9,600.0"/>
<polyline points="1182.8,720.0 1177.7,720.0"/>
<polyline points="1353.9,467.0 1348.8,467.0"/>
<polyline points="1143.5,427.0 1138.2,427.0"/>
<polyline points="1112.5,600.3 1113.4,595.0"/>
<polyline points="1325.8,419.0 1330.0,422.5"/>
<polyline points="1317.8,720.0 1323.9,720.0"/>
<polyline points="1036.8,600.0 1043.6,600.0"/>
<polyline points="1258.1,427.0 1265.1,427.0"/>
<polyline points="940.9,575.0 933.9,575.0"/>
<polyline points="1523.7,575.0 1531.1,575.0"/></g></svg>
<!-- status bar -->
<div class="sp" style="left:0;width:99px"><span style="left:5px">MapsID: 3909</span></div>
<div class="sp" style="left:102px;width:77px"><span>png</span></div>
<div class="sp" style="left:182px;width:97px"><span>MinZoom: 8</span></div>
<div class="sp" style="left:282px;width:97px"><span>MaxZoom: 18</span></div>
<div class="sp" style="left:382px;width:97px"><span>TileSize: 256</span></div>
<div class="sp" style="left:481px;width:98px"><span>EPSG:3857</span></div>
<div class="sp" style="left:582px;width:1338px"><span style="left:2px;font-size:13px">Longitude=9.975586, Latitude=47.628380, tile=8/135/89.png</span></div>
</body></html>
